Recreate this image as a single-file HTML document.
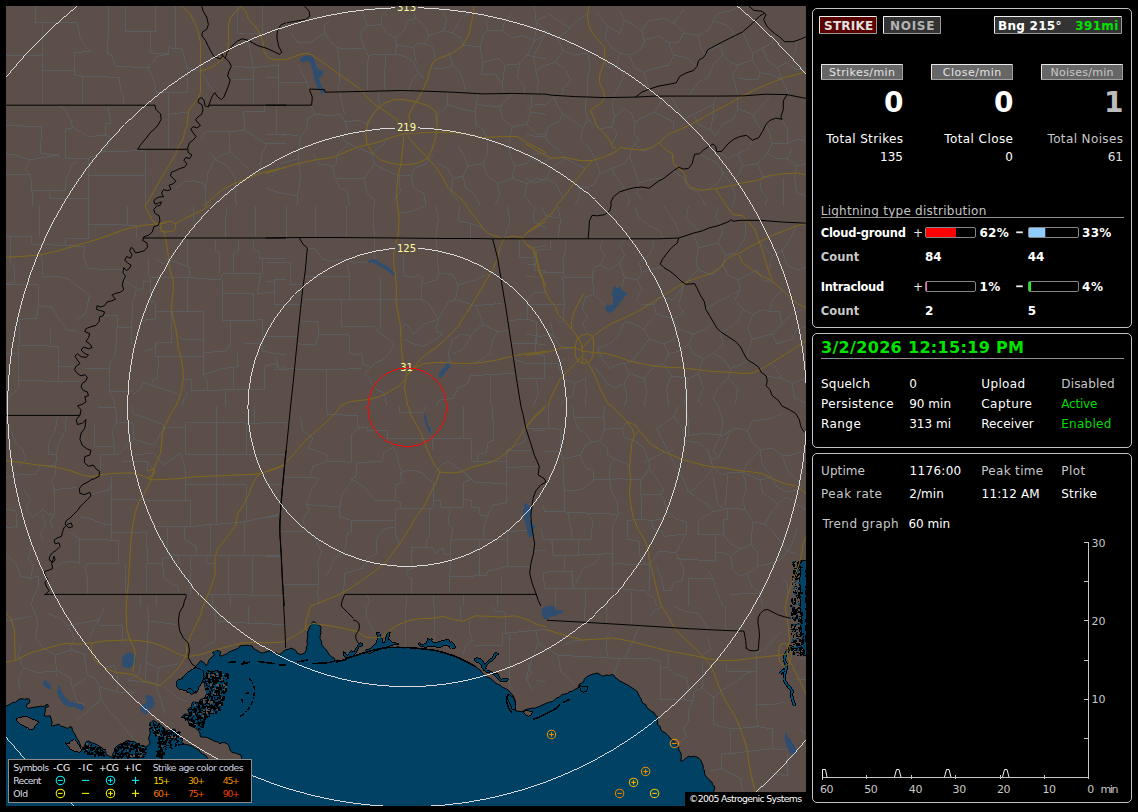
<!DOCTYPE html>
<html lang="en"><head><meta charset="utf-8"><title>Lightning Detector</title>
<style>
html,body{margin:0;padding:0;background:#000;overflow:hidden}
svg{display:block}
text{font-family:'DejaVu Sans','Liberation Sans',sans-serif;white-space:pre}
</style></head>
<body>
<svg width="1138" height="812" viewBox="0 0 1138 812" shape-rendering="auto">
<rect x="0" y="0" width="1138" height="812" fill="#000"/>
<svg x="6" y="6" width="800" height="800" viewBox="6 6 800 800" overflow="hidden" shape-rendering="crispEdges">
<rect x="6" y="6" width="800" height="800" fill="#5c4f49"/>
<path d="M35.5,6.0 35.5,22.7 77.4,22.7 79.9,35.5 84.8,45.4 91.0,51.6 74.9,52.3 74.9,74.9 82.3,76.2 119.3,77.4 120.5,89.7 123.0,94.6 123.0,105.2 M42.9,22.7 42.9,105.2 M6.0,55.2 42.9,55.2 M42.9,70.0 74.9,70.0 M108.2,6.0 108.2,35.5 107.0,52.8 111.9,55.2 115.6,66.3 147.6,67.6 153.7,79.9 156.2,92.2 168.5,92.7 187.0,92.7 M125.4,6.0 125.4,31.9 155.0,31.9 155.0,6.0 M150.1,31.9 150.1,52.8 168.5,54.0 168.5,47.9 182.1,49.1 187.0,67.6 187.0,92.7 M175.9,6.0 175.9,47.9 M147.6,67.6 156.2,56.5 168.5,54.0 M82.3,76.2 82.3,105.2 M58.9,105.7 65.1,109.4 71.3,121.7 72.5,127.9 65.1,129.1 65.1,158.2 M6.0,125.4 41.7,126.7 40.5,153.7 58.9,155.0 58.9,158.2 M108.2,105.7 109.4,114.3 110.7,123.0 105.7,124.2 105.7,135.3 87.3,136.5 72.5,127.9 M105.7,135.3 111.9,139.0 104.5,151.3 87.3,158.7 65.1,158.2 M104.5,151.3 145.1,150.8 145.1,206.0 M88.5,158.7 88.5,206.0 M88.5,175.9 145.1,175.9 M6.0,153.7 15.8,155.0 29.4,159.9 58.9,155.0 M29.4,159.9 25.7,168.5 30.6,174.7 31.9,190.7 33.1,206.0 M6.0,174.7 30.6,174.7 M31.9,190.7 65.1,190.7 66.3,178.4 72.5,163.6 77.4,159.9 M49.1,191.2 50.3,198.1 88.5,198.1 M168.5,92.7 168.5,114.3 187.0,111.9 M168.5,114.3 168.5,148.8 M207.9,151.3 215.3,158.7 207.9,173.4 205.5,188.2 205.0,206.0 M175.9,188.2 183.3,182.1 193.1,180.8 203.0,183.3 205.5,188.2 M215.3,158.7 230.1,151.3 242.4,163.6 248.6,168.5 M230.1,151.3 228.9,131.6 244.9,130.4 243.6,111.9 264.6,111.9 264.6,105.2 M228.9,131.6 205.5,131.6 200.5,139.0 M244.9,130.4 262.1,141.4 267.0,143.9 262.1,153.7 259.6,173.4 M276.9,105.2 276.9,134.0 286.0,135.3 M267.0,143.9 286.0,143.9 M214.1,158.7 227.6,166.1 235.0,178.4 236.2,206.0 M237.5,6.0 237.5,33.1 262.1,33.1 262.1,6.0 M248.6,40.5 253.5,67.6 253.5,104.5 M231.3,66.3 253.5,67.6 278.1,65.1 278.1,104.5 M232.5,79.9 253.5,79.9 M203.0,74.9 210.4,87.3 215.3,92.2 M187.0,67.6 200.5,71.3 M325.1,33.1 331.3,42.9 337.4,47.9 338.6,55.2 339.9,74.9 338.6,89.7 M309.1,42.9 325.1,33.1 323.9,25.7 330.0,20.8 M337.4,47.9 349.7,49.1 364.5,47.9 368.2,55.2 367.0,89.7 M364.5,47.9 360.8,38.0 362.0,30.6 367.0,25.7 364.5,15.8 362.0,10.9 M367.0,25.7 381.7,24.5 381.7,15.8 386.7,10.9 M381.7,24.5 386.7,33.1 395.3,38.0 396.5,45.4 395.3,54.0 385.4,54.0 384.2,89.7 M368.2,55.2 385.4,54.0 M395.3,38.0 403.9,30.6 407.6,20.8 416.2,18.3 413.7,10.9 M416.2,18.3 426.1,28.2 428.5,35.5 423.6,44.2 417.4,42.9 M396.5,45.4 413.7,47.9 417.4,42.9 M395.3,54.0 408.8,57.7 413.7,62.6 418.7,73.7 423.6,77.4 M413.7,47.9 416.2,62.6 M407.6,91.0 413.7,77.4 418.7,73.7 M423.6,44.2 433.4,46.6 434.7,58.9 M428.5,35.5 443.3,30.6 453.1,33.1 460.5,38.0 463.0,45.4 M443.3,30.6 447.0,20.8 443.3,10.9 M453.1,33.1 458.1,23.2 463.0,15.8 470.4,13.4 M448.2,51.6 453.1,65.1 458.1,70.0 463.0,79.9 465.5,91.0 M463.0,45.4 480.2,46.6 482.7,62.6 481.5,74.9 495.0,73.7 502.4,84.8 502.4,92.2 M480.2,46.6 482.7,35.5 487.6,30.6 486.4,20.8 490.1,15.8 M487.6,30.6 502.4,30.6 512.2,38.0 522.1,35.5 534.4,40.5 M502.4,30.6 504.9,20.8 512.2,13.4 M482.7,62.6 497.5,58.9 504.9,65.1 519.6,63.9 527.0,55.2 534.4,40.5 546.0,35.5 M504.9,65.1 502.4,84.8 M519.6,63.9 517.2,77.4 524.6,87.3 524.6,93.4 M534.4,40.5 536.9,20.8 546.0,15.8 M527.0,55.2 546.0,58.9 M433.4,68.8 448.2,67.6 453.1,65.1 M278.3,62.6 278.3,82.3 309.1,82.3 M298.0,65.1 305.4,79.9 309.1,88.5 M266.0,77.4 278.3,77.4 M290.6,33.1 298.0,42.9 309.1,42.9 M310.3,105.2 315.2,114.3 307.9,118.0 306.6,129.1 300.5,136.5 298.0,153.7 299.2,163.6 M315.2,114.3 330.0,115.6 339.9,114.3 344.8,121.7 347.3,129.1 342.3,136.5 348.5,143.9 M339.9,92.2 342.3,104.5 344.8,114.3 M378.0,92.2 379.3,104.5 371.9,114.3 368.2,124.2 M344.8,121.7 359.6,120.5 368.2,124.2 M447.0,92.2 447.0,104.5 438.4,114.3 437.1,124.2 M447.0,104.5 463.0,109.4 475.3,111.9 477.8,93.4 M475.3,111.9 475.3,124.2 482.7,129.1 487.6,139.0 M477.8,104.5 499.9,107.0 506.1,99.6 512.2,93.4 M499.9,107.0 502.4,119.3 512.2,126.7 527.0,124.2 530.7,111.9 531.9,94.6 M512.2,126.7 509.8,139.0 M530.7,111.9 546.0,114.3 M527.0,124.2 536.9,134.0 546.0,134.0 M266.0,134.0 298.0,135.3 M299.2,163.6 300.5,178.4 298.0,193.1 296.8,206.0 M312.8,153.7 318.9,163.6 332.5,166.1 336.2,163.6 337.4,153.7 348.5,143.9 M332.5,166.1 334.9,178.4 339.9,188.2 347.3,190.7 349.7,206.0 M348.5,143.9 364.5,151.3 371.9,153.7 374.3,163.6 381.7,168.5 M371.9,153.7 384.2,143.9 386.7,136.5 M336.2,178.4 364.5,178.4 374.3,163.6 M364.5,178.4 367.0,193.1 374.3,200.5 374.3,206.0 M381.7,168.5 399.0,175.9 411.3,175.9 413.7,168.5 M411.3,175.9 413.7,188.2 423.6,193.1 426.1,206.0 M399.0,175.9 400.2,190.7 394.0,200.5 M413.7,168.5 426.1,163.6 433.4,153.7 M438.4,163.6 448.2,168.5 453.1,178.4 450.7,193.1 458.1,200.5 M453.1,178.4 463.0,175.9 467.9,166.1 463.0,153.7 458.1,146.4 M467.9,166.1 482.7,163.6 487.6,153.7 487.6,139.0 M482.7,163.6 487.6,175.9 497.5,183.3 512.2,178.4 514.7,166.1 509.8,153.7 509.8,139.0 M463.0,175.9 465.5,188.2 475.3,195.6 480.2,206.0 M497.5,183.3 499.9,195.6 495.0,206.0 M512.2,178.4 527.0,183.3 536.9,178.4 546.0,180.8 M514.7,166.1 527.0,163.6 534.4,153.7 546.0,153.7 M527.0,183.3 524.6,195.6 531.9,206.0 M266.0,188.2 280.8,193.1 296.8,195.6 M270.9,178.4 280.8,163.6 298.0,158.7 M534.6,6.0 535.8,20.8 545.7,30.6 540.8,42.9 533.4,55.2 535.8,70.0 538.3,79.9 537.1,93.4 M548.2,13.4 558.0,20.8 570.3,28.2 577.7,20.8 587.6,13.4 M545.7,30.6 558.0,38.0 570.3,28.2 M558.0,38.0 562.9,50.3 555.5,62.6 545.7,65.1 535.8,70.0 M562.9,50.3 575.2,55.2 587.6,52.8 590.0,65.1 587.6,79.9 587.6,95.9 M555.5,62.6 565.4,70.0 570.3,79.9 562.9,89.7 562.9,94.6 M597.4,13.4 607.3,25.7 619.6,33.1 624.5,20.8 619.6,10.9 M607.3,25.7 604.8,38.0 612.2,47.9 619.6,52.8 629.4,55.2 639.3,50.3 644.2,40.5 641.7,30.6 634.3,25.7 624.5,20.8 M619.6,52.8 617.1,65.1 607.3,67.6 604.8,60.2 M617.1,65.1 624.5,74.9 619.6,84.8 614.6,94.6 M629.4,55.2 634.3,67.6 644.2,72.5 649.1,87.3 M644.2,40.5 659.0,35.5 668.8,42.9 673.7,55.2 668.8,65.1 659.0,67.6 649.1,70.0 644.2,72.5 M641.7,30.6 649.1,20.8 663.9,18.3 673.7,23.2 678.7,15.8 683.6,8.5 M673.7,23.2 683.6,33.1 678.7,42.9 668.8,42.9 M683.6,33.1 698.4,35.5 708.2,30.6 713.1,20.8 718.1,13.4 M698.4,35.5 700.8,47.9 705.8,55.2 M673.7,55.2 686.1,57.7 695.9,65.1 M713.1,20.8 727.9,25.7 735.3,35.5 M718.1,13.4 730.4,10.9 740.2,6.0 M708.2,50.3 720.5,45.4 723.0,55.2 730.4,62.6 737.8,65.1 732.8,74.9 735.3,84.8 737.8,95.9 M723.0,55.2 713.1,65.1 708.2,77.4 698.4,82.3 688.5,95.9 M742.7,31.9 747.6,42.9 752.5,52.8 762.4,47.9 772.2,42.9 774.7,33.6 M737.8,65.1 752.5,60.2 752.5,52.8 M762.4,47.9 767.3,60.2 777.2,67.6 787.0,62.6 794.4,55.2 796.9,40.5 M752.5,60.2 759.9,72.5 757.5,79.9 747.6,79.9 737.8,77.4 M777.2,67.6 782.1,79.9 787.0,89.7 788.3,94.6 M759.9,72.5 772.2,74.9 782.1,79.9 M787.0,62.6 796.9,70.0 806.0,67.6 M554.3,97.1 558.0,107.0 562.9,114.3 558.0,121.7 548.2,126.7 545.7,136.5 550.6,143.9 558.0,148.8 M526.0,109.4 535.8,104.5 545.7,104.5 554.3,97.1 M526.0,134.0 535.8,136.5 545.7,136.5 M562.9,114.3 575.2,121.7 582.6,129.1 580.2,139.0 587.6,146.4 592.5,153.7 M586.3,97.1 585.1,109.4 587.6,119.3 582.6,129.1 M587.6,119.3 599.9,129.1 612.2,126.7 614.6,116.8 612.2,104.5 614.6,97.6 M614.6,116.8 624.5,109.4 631.9,114.3 634.3,121.7 644.2,116.8 654.0,111.9 659.0,104.5 663.9,97.6 M634.3,121.7 634.3,134.0 639.3,140.2 634.3,143.9 M654.0,111.9 663.9,116.8 673.7,121.7 673.7,129.1 M612.2,126.7 617.1,134.0 612.2,143.9 M634.3,143.9 644.2,151.3 654.0,146.4 M671.3,97.6 678.7,109.4 683.6,119.3 693.4,114.3 703.3,109.4 713.1,104.5 715.6,97.6 M713.1,104.5 713.1,116.8 710.7,129.1 715.6,136.5 M693.4,114.3 698.4,124.2 708.2,129.1 710.7,129.1 M737.8,97.1 737.8,109.4 732.8,119.3 723.0,124.2 715.6,136.5 M737.8,109.4 752.5,114.3 762.4,104.5 769.8,97.1 M752.5,114.3 757.5,124.2 762.4,131.6 M526.0,156.2 540.8,163.6 550.6,158.2 M558.0,148.8 565.4,158.7 575.2,163.6 585.1,168.5 M592.5,153.7 597.4,163.6 599.9,173.4 594.9,183.3 587.6,188.2 577.7,185.8 M599.9,173.4 612.2,168.5 624.5,163.6 629.4,156.2 634.3,143.9 M629.4,156.2 634.3,168.5 639.3,183.3 636.8,193.1 641.7,200.5 M612.2,168.5 617.1,178.4 624.5,188.2 629.4,200.5 627.0,206.0 M639.3,183.3 654.0,178.4 663.9,178.4 M526.0,178.4 535.8,183.3 545.7,178.4 555.5,183.3 562.9,198.1 M545.7,178.4 550.6,168.5 565.4,158.7 M577.7,185.8 580.2,195.6 575.2,206.0 M673.7,170.5 683.6,178.4 688.5,188.2 698.4,193.1 703.3,200.5 705.8,206.0 M698.4,153.7 708.2,158.7 718.1,163.6 723.0,173.4 718.1,183.3 708.2,188.2 M718.1,151.8 727.9,158.7 737.8,153.7 747.6,148.8 752.5,140.2 M737.8,153.7 742.7,166.1 737.8,175.9 730.4,183.3 723.0,173.4 M742.7,166.1 757.5,163.6 767.3,153.7 772.2,143.9 769.8,134.0 766.1,124.2 M757.5,163.6 762.4,175.9 772.2,178.4 M772.2,143.9 787.0,143.9 796.9,139.0 806.0,141.4 M782.1,119.3 787.0,129.1 787.0,143.9 M787.0,158.7 796.9,166.1 806.0,163.6 M767.3,153.7 777.2,158.7 787.0,158.7 791.9,148.8 M730.4,183.3 735.3,193.1 732.8,206.0 M762.4,175.9 759.9,188.2 767.3,198.1 764.9,206.0 M783.3,178.4 783.3,206.0 M796.9,166.1 794.4,178.4 796.9,193.1 806.0,195.6 M88.5,206.0 88.5,224.5 136.5,225.2 136.5,238.0 M127.9,206.0 127.9,225.2 M88.5,224.5 88.5,238.0 65.1,238.0 65.1,245.4 84.8,246.6 83.6,255.2 87.3,268.8 124.2,269.5 M6.0,236.8 31.9,236.8 31.9,244.2 65.1,245.4 M10.9,236.8 10.9,262.6 14.6,267.6 14.6,282.3 6.0,283.6 M39.2,206.0 39.2,236.8 M41.7,255.2 42.9,277.4 47.9,276.2 63.9,277.4 70.0,279.9 89.7,295.9 87.3,304.5 84.8,314.3 77.4,319.3 M38.0,284.8 38.0,305.7 51.6,307.0 58.9,319.3 66.3,329.1 77.4,331.6 M6.0,284.8 38.0,284.8 M19.5,319.3 36.8,318.0 38.0,305.7 M19.5,319.3 19.5,345.1 58.9,346.4 58.9,366.1 73.7,366.1 M50.3,329.1 50.3,345.1 M18.3,345.1 18.3,380.8 79.9,381.3 M6.0,353.7 18.3,353.7 M58.9,366.1 58.9,380.8 M6.0,400.5 18.3,388.2 18.3,380.8 M103.3,315.6 116.8,315.6 118.0,327.9 131.6,327.9 132.8,302.0 136.5,289.7 143.9,288.5 143.9,281.1 150.1,281.1 M124.2,269.5 123.7,279.9 136.5,288.5 M116.8,327.9 115.6,353.7 109.4,363.6 109.4,391.9 114.3,400.5 114.3,406.0 M131.6,327.9 131.6,343.9 136.5,343.9 M109.4,391.9 131.6,391.9 132.8,388.2 M84.8,368.5 109.4,368.5 M150.1,277.4 150.1,300.8 155.0,302.0 155.0,319.3 140.2,320.5 M150.1,277.4 187.0,277.4 220.2,279.9 222.7,273.7 260.9,273.0 259.6,279.9 257.2,293.4 M187.0,239.2 187.0,266.3 189.5,267.6 189.5,277.4 M155.0,258.9 163.6,263.9 167.3,258.9 187.0,266.3 M148.8,257.7 148.8,277.4 M187.0,277.4 187.0,311.9 203.0,311.9 203.0,339.0 183.3,339.0 178.4,336.5 M155.0,311.9 187.0,311.9 M171.0,311.9 171.0,342.7 156.2,342.7 155.0,356.2 158.7,356.7 157.4,378.4 152.5,379.6 153.7,385.8 142.7,382.1 141.4,388.2 132.8,394.4 M142.7,353.7 146.4,350.1 153.7,348.8 156.2,342.7 M158.7,356.7 203.0,356.2 M203.0,339.0 203.0,374.7 222.7,368.5 233.8,367.3 M215.3,239.2 215.3,250.3 219.0,251.6 219.0,273.0 M238.7,239.2 238.7,250.3 233.8,254.0 233.8,273.0 M253.5,239.2 253.5,250.3 259.6,251.6 259.6,258.9 286.0,258.9 M262.1,258.9 262.1,273.0 M222.7,279.9 222.7,320.5 253.5,320.5 253.5,293.4 222.7,293.4 M257.2,293.4 274.4,292.2 274.4,279.9 286.0,279.9 M253.5,320.5 262.1,319.3 262.1,351.3 286.0,355.0 M230.1,320.5 230.1,343.9 226.4,351.3 203.0,352.5 M237.5,351.3 237.5,366.1 233.8,367.3 233.8,389.5 216.5,390.2 207.9,390.7 206.7,378.4 203.0,374.7 M244.9,343.9 262.1,343.9 M264.6,366.1 264.6,389.5 233.8,389.5 M286.0,366.1 279.3,368.5 276.9,363.6 264.6,366.1 M183.3,379.6 191.9,379.6 191.9,390.7 207.9,390.7 M153.7,385.8 178.4,394.4 M188.2,391.9 183.3,400.5 182.1,406.0 M225.2,390.7 225.2,406.0 M248.6,389.5 248.6,406.0 M226.4,206.0 225.2,238.0 M255.9,206.0 255.9,238.0 M193.1,206.0 193.1,220.8 M286.9,206.0 286.9,237.5 M315.2,206.0 315.2,237.5 M346.0,206.0 346.0,237.5 M373.1,206.0 374.3,237.5 M399.0,213.4 413.7,210.9 423.6,206.0 M435.9,206.0 438.4,220.8 435.9,237.5 M459.3,206.0 458.1,220.8 470.4,223.2 470.4,237.5 M470.4,223.2 482.7,228.2 M507.3,206.0 509.8,220.8 504.9,237.5 M534.4,206.0 533.2,220.8 546.0,228.2 M306.6,247.9 315.2,249.1 322.6,258.9 332.5,261.4 342.3,258.9 354.6,262.6 364.5,262.6 368.2,261.4 M347.3,265.1 349.7,276.2 349.7,299.1 M302.9,276.2 349.7,276.2 M302.9,299.1 341.1,299.1 380.5,299.6 421.1,299.6 M380.5,277.4 380.5,299.6 M374.3,239.2 374.3,258.9 M402.7,239.2 403.9,276.2 413.7,277.4 418.7,274.9 422.4,277.4 421.1,299.6 M435.9,239.2 437.1,250.3 438.4,272.5 435.9,279.9 423.6,283.6 421.1,279.9 M438.4,272.5 453.1,274.9 458.1,284.8 455.6,299.6 448.2,302.0 438.4,319.3 M458.1,284.8 475.3,279.9 487.6,274.9 495.0,272.5 M421.1,299.6 428.5,303.3 438.4,319.3 423.6,324.2 413.7,334.0 406.4,324.2 400.2,329.1 M341.1,299.1 341.1,326.7 374.3,326.7 380.5,334.0 389.1,340.2 M380.5,299.6 380.5,329.1 M300.5,321.7 317.7,321.7 318.9,334.0 341.1,334.0 M341.1,334.0 349.7,335.3 349.7,353.7 362.0,355.0 362.0,363.6 369.4,366.1 M298.0,343.9 315.2,345.1 318.9,334.0 M266.0,281.1 274.6,281.1 274.6,304.5 302.9,304.5 M266.0,262.6 290.6,262.6 290.6,284.8 302.9,284.8 M266.0,336.5 298.0,336.5 M275.8,356.2 278.3,366.1 274.6,369.8 295.5,368.5 M326.3,369.8 326.3,406.0 M295.5,369.8 326.3,369.8 362.0,368.5 M389.1,340.2 394.0,343.9 389.1,353.7 384.2,358.7 374.3,363.6 364.5,373.4 369.4,378.4 374.3,388.2 384.2,393.1 386.7,406.0 M438.4,319.3 435.9,331.6 443.3,334.0 435.9,339.0 423.6,346.4 413.7,343.9 403.9,339.0 M475.3,305.7 480.2,315.6 482.7,324.2 475.3,330.4 470.4,336.5 460.5,334.0 453.1,339.0 448.2,353.7 450.7,363.6 M475.3,305.7 487.6,304.5 502.4,303.3 M455.6,299.6 475.3,305.7 M482.7,324.2 497.5,331.6 508.6,330.4 M497.5,331.6 492.5,340.2 490.1,353.7 482.7,358.7 475.3,363.6 M470.4,336.5 463.0,348.8 453.1,353.7 M546.0,292.2 534.4,292.2 527.0,299.6 527.0,319.3 507.3,320.5 M527.0,319.3 536.9,321.7 536.9,343.9 546.0,345.1 M512.2,343.9 536.9,343.9 M534.4,257.7 534.4,270.0 546.0,271.3 M519.6,239.2 519.6,257.7 534.4,257.7 533.2,247.9 546.0,245.4 M514.7,373.4 487.6,374.7 470.4,375.9 467.9,383.3 458.1,388.2 453.1,398.1 438.4,400.5 435.9,406.0 M490.1,375.9 490.1,406.0 M515.9,378.4 546.0,378.4 M512.2,358.7 527.0,363.6 546.0,363.6 M558.0,206.0 560.5,220.8 558.0,238.0 M540.8,206.0 545.7,215.8 558.0,218.3 M634.3,206.0 639.3,218.3 649.1,225.7 659.0,230.6 663.9,238.8 M663.9,206.0 673.7,220.8 678.7,230.6 M688.5,206.0 686.1,218.3 698.4,230.6 M718.1,206.0 715.6,218.3 720.5,224.5 M526.0,263.9 535.8,265.1 537.1,250.3 550.6,249.1 550.6,240.5 M565.4,240.5 565.4,250.3 562.9,260.2 564.2,277.4 592.5,277.4 593.7,267.6 599.9,265.1 604.8,255.2 599.9,247.9 602.3,240.5 M562.9,277.4 564.2,304.5 562.9,321.7 558.0,321.7 M526.0,276.2 538.3,277.4 543.2,272.5 562.9,272.5 M526.0,304.5 564.2,304.5 M592.5,277.4 593.7,294.6 585.1,297.1 582.6,309.4 587.6,316.8 582.6,324.2 587.6,334.0 M593.7,294.6 604.8,304.5 M599.9,265.1 609.7,270.0 619.6,262.6 624.5,255.2 619.6,245.4 624.5,240.5 M619.6,262.6 624.5,277.4 636.8,279.9 641.7,272.5 639.3,262.6 649.1,255.2 654.0,245.4 651.6,239.2 M624.5,277.4 622.0,287.3 M636.8,279.9 641.7,289.7 636.8,299.6 641.7,304.5 654.0,304.5 659.0,297.1 M641.7,272.5 659.0,267.6 663.9,267.6 M659.0,297.1 673.7,299.6 683.6,284.8 M654.0,304.5 656.5,314.3 649.1,321.7 644.2,329.1 634.3,324.2 624.5,321.7 M624.5,321.7 619.6,334.0 609.7,343.9 597.4,348.8 M644.2,329.1 649.1,339.0 641.7,348.8 634.3,358.7 624.5,363.6 M656.5,314.3 673.7,319.3 683.6,311.9 678.7,304.5 683.6,284.8 M673.7,319.3 678.7,329.1 673.7,339.0 663.9,343.9 649.1,339.0 M678.7,329.1 693.4,334.0 705.8,329.1 713.1,321.7 M693.4,334.0 688.5,343.9 693.4,353.7 703.3,358.7 713.1,353.7 723.0,343.9 720.5,331.6 M663.9,343.9 668.8,353.7 663.9,363.6 654.0,366.1 M688.5,343.9 678.7,351.3 668.8,353.7 M550.6,321.7 553.1,334.0 558.0,343.9 565.4,348.8 575.2,347.6 M526.0,334.0 540.8,336.5 553.1,334.0 M535.8,336.5 535.8,353.7 544.5,356.2 544.5,378.4 535.8,378.4 M544.5,363.6 558.0,363.6 565.4,358.7 M558.0,363.6 562.9,378.4 575.2,383.3 585.1,378.4 586.3,393.1 585.1,406.0 M575.2,383.3 572.8,395.6 562.9,400.5 560.5,406.0 M526.0,378.4 535.8,378.4 538.3,393.1 533.4,406.0 M597.4,348.8 602.3,358.7 609.7,368.5 619.6,363.6 624.5,363.6 629.4,373.4 624.5,383.3 614.6,388.2 607.3,383.3 599.9,373.4 592.5,366.1 M629.4,373.4 644.2,378.4 654.0,366.1 M644.2,378.4 646.7,393.1 644.2,406.0 M624.5,383.3 627.0,398.1 624.5,406.0 M663.9,363.6 671.3,375.9 666.4,388.2 668.8,406.0 M671.3,375.9 688.5,378.4 698.4,373.4 703.3,358.7 M698.4,373.4 703.3,388.2 698.4,400.5 703.3,406.0 M688.5,378.4 686.1,393.1 683.6,406.0 M713.1,353.7 723.0,358.7 730.4,368.5 727.9,378.4 737.8,388.2 735.3,403.0 M730.4,368.5 742.7,363.6 747.6,359.9 M727.9,378.4 718.1,388.2 713.1,398.1 718.1,406.0 M693.4,233.1 698.4,247.9 695.9,262.6 698.4,270.0 688.5,279.9 686.1,284.3 M698.4,247.9 718.1,242.9 725.5,255.2 723.0,265.1 727.9,274.9 737.8,279.9 747.6,274.9 757.5,270.0 M718.1,242.9 723.0,230.6 720.5,224.5 M725.5,255.2 735.3,252.8 745.2,238.0 745.2,220.8 M698.4,270.0 713.1,274.9 723.0,265.1 M737.8,279.9 740.2,289.7 735.3,299.6 742.7,309.4 752.5,314.3 762.4,309.4 769.8,311.9 M740.2,289.7 713.1,304.5 705.8,309.4 M742.7,309.4 737.8,321.7 727.9,329.1 720.5,331.6 M752.5,314.3 747.6,329.1 752.5,339.0 772.2,334.0 782.1,324.2 779.6,311.9 769.8,311.9 M752.5,339.0 747.6,353.7 747.6,359.9 M772.2,334.0 777.2,343.9 791.9,339.0 796.9,329.1 806.0,326.7 M782.1,324.2 791.9,314.3 801.8,309.4 M757.5,270.0 762.4,279.9 772.2,282.3 M769.8,311.9 772.2,299.6 782.1,289.7 M772.2,363.6 782.1,378.4 791.9,383.3 806.0,378.4 M766.1,375.9 782.1,378.4 M791.9,383.3 794.4,398.1 806.0,403.0 M759.9,241.7 772.2,255.2 782.1,250.3 791.9,235.5 796.9,225.7 M782.1,250.3 787.0,265.1 796.9,270.0 806.0,267.6 M772.2,255.2 769.8,267.6 M57.7,416.3 55.2,430.6 49.1,440.5 47.9,454.0 56.5,454.0 55.2,474.9 51.6,479.9 54.0,489.7 54.0,514.3 50.3,521.7 52.8,529.1 M66.3,416.3 65.1,430.6 57.7,445.4 56.5,454.0 M6.0,477.4 18.3,474.9 35.5,474.9 40.5,465.1 55.2,465.1 M10.9,430.6 15.8,442.9 23.2,450.3 25.7,460.2 18.3,465.1 M6.0,509.4 15.8,510.7 17.1,526.7 6.0,527.9 M23.2,489.7 30.6,499.6 25.7,509.4 33.1,516.8 42.9,509.4 47.9,514.3 54.0,514.3 M54.0,489.7 77.4,487.3 M6.0,553.7 15.8,563.6 20.8,575.9 30.6,578.4 38.0,575.9 M30.6,548.8 28.2,558.7 33.1,566.1 30.6,578.4 M38.0,575.9 38.0,588.2 33.1,598.1 30.6,606.0 M42.9,514.3 45.4,524.2 40.5,534.0 42.9,539.0 M98.3,406.0 98.3,407.2 115.6,407.2 116.8,422.7 132.8,422.7 M94.6,423.2 94.6,446.6 114.3,446.6 114.3,454.0 100.8,454.0 100.8,470.0 M116.8,422.7 111.9,430.6 114.3,446.6 M132.8,406.0 132.8,413.4 163.6,424.5 163.6,428.2 185.8,426.9 M132.8,422.7 134.0,439.2 119.3,454.0 114.3,454.0 M134.0,439.2 153.7,445.4 163.6,428.2 M185.8,422.7 185.8,454.0 216.5,454.0 216.5,422.7 185.8,422.7 M216.5,422.7 239.9,422.7 247.3,423.2 286.0,422.7 M216.5,454.0 246.1,454.0 246.1,423.2 M246.1,454.0 286.0,454.0 M254.7,406.0 254.7,422.7 M216.5,406.0 216.5,422.7 M147.6,461.4 147.6,471.3 M121.7,461.4 147.6,461.4 153.7,470.0 M180.8,452.8 185.8,472.5 185.8,500.8 190.7,500.8 190.7,526.7 M134.0,455.2 153.7,452.8 163.6,465.1 180.8,452.8 M216.5,454.0 216.5,524.2 244.9,521.7 279.3,514.3 M185.8,484.8 216.5,484.8 246.1,484.8 246.1,521.7 M111.9,476.2 111.9,499.6 153.7,500.1 185.8,500.8 M79.9,516.8 92.2,519.3 104.5,524.2 111.9,524.2 111.9,499.6 M92.2,494.6 99.6,492.2 109.4,489.7 111.9,482.3 M111.9,524.2 111.9,540.2 118.0,540.2 118.0,563.6 87.3,563.6 84.8,567.3 87.3,578.4 87.3,594.4 M68.8,531.6 79.9,539.0 111.9,540.2 M79.9,539.0 79.9,563.6 70.0,561.1 60.2,563.6 52.8,568.5 M111.9,532.8 134.0,532.8 146.4,531.6 147.6,563.6 162.4,563.6 M156.2,526.7 190.7,526.7 210.4,524.2 216.5,524.2 M167.3,526.7 167.3,553.7 178.4,555.0 178.4,563.6 M184.5,526.7 184.5,540.2 195.6,546.4 196.8,555.0 178.4,555.0 M210.4,524.2 210.4,555.0 196.8,555.0 M244.9,521.7 244.9,555.0 210.4,555.0 M125.4,563.6 125.4,594.4 M146.4,563.6 146.4,594.4 M162.4,558.7 163.6,578.4 171.0,583.3 178.4,587.0 178.4,594.4 M162.4,558.7 178.4,555.0 M190.7,555.0 190.7,594.4 M206.7,555.0 206.7,563.6 215.3,563.6 M228.9,555.0 228.9,594.4 M252.2,555.0 252.2,594.4 M244.9,555.0 280.6,555.0 M230.1,594.4 230.1,606.0 M207.9,594.4 286.0,595.6 M212.8,594.4 212.8,606.0 M140.2,594.4 140.2,606.0 M156.2,594.4 156.2,606.0 M326.3,406.0 327.6,414.6 357.1,415.4 358.3,428.2 367.0,426.9 367.0,430.6 387.9,430.6 387.9,440.5 394.0,446.6 384.2,452.8 381.7,461.4 357.1,462.6 355.9,477.4 351.0,478.6 M399.0,406.0 399.0,412.2 423.6,412.2 426.1,406.0 M463.0,406.0 463.0,438.0 432.2,438.0 432.2,450.3 M387.9,430.6 387.9,438.0 432.2,438.0 M492.5,406.0 493.8,440.5 487.6,442.9 486.4,452.8 477.8,454.0 477.8,461.4 506.1,461.4 506.1,450.3 M463.0,438.0 471.6,438.0 471.6,461.4 477.8,461.4 M522.1,430.6 525.8,440.5 506.1,450.3 M266.0,422.0 288.2,422.0 M300.5,417.1 302.9,430.6 312.8,438.0 307.9,447.9 318.9,451.6 327.6,455.2 326.3,461.4 351.0,462.1 351.0,435.5 358.3,428.2 M326.3,461.4 312.8,466.3 310.3,477.4 318.9,478.6 311.6,489.7 306.6,504.5 309.1,509.4 302.9,519.3 305.4,529.1 315.2,539.0 321.4,551.3 317.7,563.6 318.9,578.4 317.7,593.1 318.9,606.0 M284.5,477.4 310.3,477.4 M266.0,484.8 280.8,484.8 M266.0,518.0 278.3,515.6 M280.8,531.6 305.4,531.6 M266.0,556.2 280.8,556.2 M283.2,584.5 318.9,584.5 M351.0,478.6 364.5,487.3 375.6,500.8 395.3,500.8 395.3,484.8 402.7,482.3 400.2,472.5 403.9,471.3 413.7,470.0 423.6,473.7 428.5,479.9 433.4,482.3 M394.0,446.6 400.2,467.6 402.7,472.5 M351.0,478.6 351.0,482.3 342.3,493.4 339.9,507.0 339.9,516.8 351.0,520.5 395.3,520.5 M306.6,504.5 339.9,507.0 M395.3,500.8 400.2,502.0 400.2,508.2 395.3,509.4 395.3,520.5 395.3,534.0 399.0,543.9 M351.0,520.5 351.0,531.6 347.3,534.0 344.8,551.3 333.7,558.7 330.0,568.5 325.1,575.9 M395.3,526.7 384.2,529.1 376.8,539.0 376.8,553.7 367.0,558.7 362.0,568.5 344.8,573.4 343.6,593.1 M400.2,508.2 429.8,508.2 433.4,508.2 433.4,482.3 M433.4,500.8 440.8,500.8 440.8,507.0 463.0,507.0 463.0,482.3 470.4,479.9 465.5,473.7 448.2,461.4 440.8,465.1 435.9,472.5 M465.5,473.7 474.1,482.3 506.1,483.6 506.1,461.4 M464.2,499.6 471.6,500.8 471.6,507.0 479.0,508.2 480.2,515.6 487.6,515.6 492.5,504.5 506.1,503.3 506.1,483.6 M429.8,508.2 429.8,536.5 426.1,540.2 426.1,547.6 411.3,547.6 411.3,563.6 413.7,568.5 406.4,569.8 407.6,577.1 411.3,578.4 411.3,594.4 M449.5,509.4 448.2,524.2 453.1,529.1 450.7,540.2 449.5,593.1 M426.1,547.6 433.4,547.6 434.7,553.7 443.3,547.6 443.3,553.7 449.5,555.0 M450.7,540.2 479.0,539.0 507.3,539.0 507.3,531.6 527.0,530.4 M487.6,515.6 483.9,529.1 483.9,539.0 M479.0,539.0 479.0,575.9 449.5,576.4 M507.3,539.0 507.3,566.1 499.9,568.5 487.6,571.0 486.4,575.9 479.0,575.9 M507.3,566.1 530.7,566.1 M501.2,575.9 501.2,594.4 M506.1,450.3 530.7,450.3 M506.1,467.6 536.9,466.3 M533.2,430.6 546.0,430.6 M534.4,551.3 546.0,550.1 M367.0,594.4 369.4,600.5 367.0,606.0 M406.4,594.4 406.4,606.0 M433.4,594.4 433.4,606.0 M463.0,594.4 463.0,606.0 M497.5,594.4 497.5,606.0 M548.2,406.0 548.2,428.2 526.0,428.2 M548.2,428.2 560.5,429.4 560.5,451.6 544.5,451.6 M572.8,406.0 574.0,417.1 603.6,417.1 604.8,406.0 M574.0,417.1 577.7,428.2 587.6,435.5 592.5,441.7 585.1,445.4 580.2,455.2 562.9,458.9 560.5,451.6 M603.6,417.1 604.8,429.4 622.0,428.2 627.0,422.0 M604.8,429.4 599.9,440.5 592.5,441.7 M622.0,428.2 624.5,438.0 634.3,440.5 M599.9,440.5 607.3,447.9 607.3,454.0 614.6,458.9 627.0,463.9 629.4,467.6 M580.2,455.2 585.1,467.6 593.7,471.3 593.7,479.9 581.4,489.7 564.2,491.0 M562.9,458.9 564.2,491.0 564.2,511.9 544.5,511.9 543.2,504.5 M593.7,479.9 609.7,479.9 611.0,489.7 617.1,502.0 618.3,514.3 M609.7,479.9 617.1,478.6 640.5,479.9 M614.6,458.9 609.7,467.6 609.7,479.9 M564.2,511.9 587.6,513.1 592.5,521.7 591.3,539.0 551.9,539.0 550.6,543.9 M587.6,513.1 618.3,514.3 612.2,526.7 612.2,553.7 612.2,590.7 M567.9,511.9 572.8,539.0 M551.9,539.0 553.1,555.0 578.9,555.0 578.9,540.2 M540.8,529.1 543.2,539.0 551.9,539.0 M564.2,555.0 564.2,571.0 543.2,572.2 544.5,588.2 572.8,588.2 572.8,571.0 564.2,571.0 M578.9,555.0 612.2,553.7 M599.9,556.2 594.9,563.6 582.6,568.5 575.2,583.3 572.8,588.2 M572.8,588.2 612.2,588.2 644.2,590.7 M612.2,563.6 649.1,564.8 649.1,590.7 M627.0,520.5 627.0,539.0 639.3,541.4 639.3,553.7 644.2,563.6 M640.5,479.9 641.7,519.3 627.0,520.5 M641.7,494.6 660.2,494.6 663.9,499.6 666.4,511.9 662.7,519.3 651.6,520.5 M641.7,519.3 651.6,520.5 654.0,529.1 662.7,531.6 663.9,536.5 673.7,535.3 686.1,534.0 686.1,521.7 676.2,519.3 671.3,514.3 666.4,511.9 M649.1,468.8 659.0,482.3 663.9,489.7 660.2,494.6 M634.3,440.5 644.2,447.9 649.1,462.6 649.1,468.8 M644.2,462.6 663.9,452.8 673.7,450.3 M649.1,468.8 641.7,479.9 M656.5,428.2 673.7,415.8 678.7,406.0 M673.7,415.8 683.6,430.6 683.6,440.5 M656.5,428.2 663.9,442.9 673.7,462.6 683.6,479.9 688.5,492.2 695.9,487.3 708.2,474.9 713.1,467.6 M688.5,492.2 698.4,499.6 708.2,504.5 713.1,511.9 703.3,516.8 698.4,521.7 698.4,534.0 723.0,534.0 723.0,519.3 727.9,519.3 727.9,508.2 713.1,511.9 M683.6,440.5 698.4,442.9 708.2,450.3 710.7,460.2 713.1,467.6 M688.5,435.5 703.3,433.1 723.0,435.5 730.4,430.6 M686.1,406.0 688.5,420.8 688.5,435.5 M718.1,406.0 723.0,420.8 720.5,435.5 713.1,450.3 718.1,457.7 710.7,460.2 M730.4,430.6 737.8,428.2 747.6,430.6 752.5,420.8 772.2,418.3 782.1,413.4 M730.4,430.6 725.5,442.9 718.1,457.7 M747.6,430.6 752.5,442.9 759.9,450.3 747.6,462.6 742.7,472.5 M713.1,467.6 723.0,474.9 730.4,472.5 742.7,472.5 745.2,479.9 746.4,489.7 742.7,499.6 745.2,509.4 727.9,508.2 M727.9,474.9 725.5,504.5 M713.1,477.4 718.1,504.5 723.0,508.2 M759.9,450.3 772.2,447.9 782.1,455.2 791.9,455.2 806.0,450.3 M759.9,479.9 762.4,492.2 772.2,499.6 777.2,504.5 M742.7,472.5 759.9,479.9 772.2,477.4 777.2,487.3 787.0,492.2 796.9,489.7 M772.2,477.4 762.4,465.1 759.9,450.3 M782.1,455.2 787.0,470.0 796.9,479.9 801.8,487.3 M777.2,504.5 769.8,514.3 764.9,524.2 752.5,521.7 745.2,509.4 M777.2,504.5 787.0,497.1 796.9,504.5 806.0,509.4 M752.5,521.7 751.3,543.9 757.5,553.7 757.5,566.1 747.6,573.4 740.2,575.9 732.8,568.5 730.4,556.2 740.2,548.8 745.2,547.6 751.3,543.9 M723.0,534.0 730.4,543.9 740.2,548.8 M715.6,534.0 715.6,552.5 723.0,552.5 730.4,556.2 M676.2,553.7 683.6,568.5 682.4,580.8 673.7,582.1 671.3,590.7 M659.0,551.3 676.2,552.5 686.1,534.0 M676.2,558.7 715.6,561.1 715.6,552.5 M649.1,564.8 654.0,558.7 659.0,551.3 M708.2,571.0 713.1,578.4 715.6,588.2 723.0,606.0 M688.5,578.4 713.1,578.4 M688.5,578.4 688.5,606.0 M757.5,566.1 769.8,563.6 782.1,558.7 787.0,551.3 796.9,553.7 M764.9,524.2 774.7,534.0 782.1,543.9 787.0,551.3 M747.6,573.4 752.5,588.2 759.9,593.1 762.4,606.0 M730.4,594.4 762.4,593.1 M782.1,578.4 787.0,583.3 787.0,593.1 M796.9,529.1 791.9,543.9 787.0,551.3 M631.9,590.7 631.9,606.0 M585.1,588.2 585.1,606.0 M555.5,588.2 555.5,606.0 M644.2,590.7 654.0,598.1 656.5,606.0 M671.3,590.7 663.9,590.7 661.4,578.4 656.5,566.1 M31.8,606.0 38.0,620.8 35.5,638.0 42.9,647.8 55.2,655.2 56.4,670.0 70.0,677.4 72.4,687.2 M6.0,620.8 20.8,618.3 31.8,615.8 M20.8,645.4 18.3,655.2 23.2,667.5 18.3,679.8 19.5,689.7 M47.8,613.4 60.1,618.3 67.5,625.7 74.9,638.0 70.0,647.8 77.4,651.5 87.2,655.2 M67.5,625.7 99.5,619.5 104.4,606.0 M89.7,638.0 94.6,625.7 99.5,619.5 M99.5,625.7 122.9,625.7 122.9,640.4 M147.5,606.0 148.7,620.8 147.5,640.4 146.3,662.6 145.0,679.8 M148.7,620.8 175.8,624.5 M215.2,606.0 215.2,620.8 248.4,623.2 248.4,606.0 M215.2,620.8 215.2,640.4 202.9,647.8 M248.4,623.2 285.8,624.5 M55.2,655.2 70.0,650.3 79.8,652.8 M84.7,655.2 87.2,674.9 94.6,677.4 99.5,687.2 100.7,699.5 M23.2,667.5 35.5,672.4 55.2,671.2 57.7,677.4 M72.4,687.2 87.2,677.4 M72.4,687.2 77.4,702.0 84.7,704.4 M99.5,687.2 116.7,692.1 118.0,677.4 114.3,665.1 104.4,667.5 M116.7,692.1 136.4,692.1 M126.6,679.8 145.0,682.3 158.6,684.7 M158.6,667.5 156.1,687.2 161.0,699.5 165.9,714.3 M145.0,662.6 158.6,667.5 178.2,663.8 M100.7,699.5 104.4,703.2 109.3,711.8 119.2,721.6 129.0,734.0 138.9,743.8 M77.4,719.2 87.2,711.8 100.7,699.5 M163.5,687.2 175.8,697.0 188.1,702.0 M141.3,662.6 138.9,674.9 126.6,679.8 M365.7,606.0 366.9,618.3 371.8,628.1 374.3,633.1 M405.0,606.0 405.0,646.6 M434.6,606.0 434.6,647.8 M460.4,606.0 460.4,619.5 M492.4,606.0 494.8,610.9 504.7,612.2 505.9,617.1 M470.2,620.8 469.0,630.6 472.7,640.4 465.3,645.4 462.9,655.2 M505.9,617.1 505.9,633.1 502.2,634.3 502.2,645.4 475.2,645.4 M505.9,633.1 545.8,629.4 M509.6,634.3 509.6,689.7 M536.7,679.8 545.8,682.3 M526.8,662.6 531.7,672.4 526.8,679.8 531.7,689.7 M585.1,606.0 583.9,622.0 M606.0,606.0 606.0,623.2 M631.9,606.0 631.9,624.5 M654.0,610.9 663.9,606.0 M673.7,606.0 683.6,610.9 698.4,613.4 703.3,620.8 708.2,629.4 M650.4,617.1 654.0,610.9 M725.5,606.0 725.5,630.6 M535.8,630.6 538.3,642.9 533.4,655.2 528.5,670.0 526.0,679.9 M538.3,642.9 558.0,655.2 560.5,670.0 575.2,684.8 M558.0,655.2 582.6,656.5 607.3,657.7 606.0,638.0 609.7,631.9 M562.9,645.4 575.2,640.5 582.6,640.0 M607.3,657.7 619.6,658.9 614.6,672.5 617.1,678.6 M639.3,626.9 634.3,638.0 627.0,652.8 624.5,658.9 651.6,658.9 660.2,661.4 660.2,699.6 683.6,699.6 693.4,700.8 M624.5,658.9 619.6,658.9 M668.8,652.8 667.6,667.6 676.2,674.9 686.1,677.4 688.5,687.3 683.6,699.6 M667.6,667.6 660.2,667.6 M708.2,638.0 710.7,650.3 703.3,654.0 M702.1,661.4 702.1,687.3 693.4,692.2 693.4,700.8 688.5,709.4 688.5,721.7 683.6,729.1 686.1,736.5 678.7,743.9 M702.1,687.3 713.1,697.1 713.1,724.2 730.4,729.1 730.4,753.7 721.8,753.7 721.8,768.5 710.7,771.0 M713.1,697.1 723.0,689.7 735.3,682.3 747.6,672.5 756.2,671.3 M726.7,662.6 726.7,671.3 756.2,671.3 756.2,651.6 M756.2,671.3 756.2,704.5 772.2,704.5 784.6,702.0 M756.2,704.5 757.5,726.7 772.2,729.1 772.2,726.7 M730.4,729.1 757.5,726.7 M730.4,753.7 747.6,751.3 772.2,748.8 787.0,750.1 M772.2,729.1 772.2,748.8 M721.8,768.5 740.2,778.4 742.7,791.9 M772.2,773.4 787.0,775.9 787.0,753.7 M782.1,630.6 772.2,640.5 762.4,650.3 756.2,651.6 M796.9,657.7 806.0,658.9 M796.9,679.9 806.0,679.9 M799.3,729.1 806.0,734.0" fill="none" stroke="#5b5e5e" stroke-width="0.99"/>
<path d="M5.4,706.3 8.5,705.1 11.5,703.2 13.6,702.3 15.9,702.3 18.3,699.6 20.8,698.6 24.5,699.3 28.2,698.6 30.0,700.2 29.4,703.0 26.9,704.5 26.3,706.9 28.2,708.4 31.9,707.6 34.9,707.2 38.0,706.7 40.5,706.2 43.0,706.4 45.4,706.0 46.0,704.5 47.9,704.7 48.5,706.7 45.4,707.6 45.2,711.9 44.2,715.8 47.3,716.2 50.3,715.8 51.3,719.3 52.2,722.9 50.9,726.0 55.3,725.2 58.9,724.2 60.8,726.0 63.9,726.9 67.6,728.5 70.0,726.6 71.9,727.3 72.5,730.3 73.5,732.3 75.0,734.0 76.4,737.7 78.7,740.8 79.9,743.9 81.1,747.0 83.0,748.8 84.8,745.1 86.0,742.0 88.5,740.8 91.0,742.7 94.7,743.6 97.7,745.1 100.8,747.0 103.3,748.8 105.7,751.3 106.4,755.0 109.4,756.2 113.1,757.7 112.7,755.3 112.9,753.1 114.7,751.1 114.4,748.8 116.1,746.8 118.2,745.2 120.5,743.9 123.4,743.5 125.4,741.5 127.9,740.4 130.9,741.5 134.1,741.4 136.1,742.7 138.0,744.3 140.2,745.4 143.3,745.6 146.0,747.0 146.0,747.0 148.0,745.6 149.7,743.9 149.7,741.3 148.5,739.0 149.0,736.7 149.9,734.6 150.2,732.4 149.7,729.9 150.9,727.9 150.8,725.3 149.7,722.9 151.6,721.9 153.4,720.5 156.1,722.0 158.3,724.2 161.3,725.4 163.2,727.9 165.4,729.7 168.2,730.3 171.2,729.7 174.3,729.1 176.6,730.7 179.2,731.6 179.4,734.2 180.5,736.6 181.7,739.0 181.6,741.6 182.9,743.9 186.6,744.5 189.8,745.2 192.8,746.3 194.6,748.0 196.9,748.7 198.9,750.0 200.5,752.3 202.6,753.9 205.1,755.0 207.6,757.7 208.3,760.6 207.6,763.6 209.8,762.9 212.0,763.1 214.2,764.4 216.4,763.5 218.7,763.8 220.9,763.2 223.1,763.6 225.3,763.4 227.5,763.3 229.7,763.7 232.0,763.7 234.2,764.3 236.4,763.9 238.6,764.4 240.8,763.6 241.5,760.7 241.7,757.8 240.8,755.0 237.1,753.7 234.7,752.8 232.2,752.5 230.5,751.0 229.7,748.8 229.1,746.1 227.3,743.9 224.8,742.7 222.1,742.5 219.9,743.9 217.7,742.0 215.0,741.4 212.5,740.1 210.0,739.0 207.7,737.7 205.1,737.1 202.6,737.3 200.2,736.5 200.1,733.9 198.9,731.6 197.2,729.6 195.3,727.9 193.0,727.0 190.7,726.1 189.1,724.2 188.4,721.4 186.6,719.3 184.5,717.5 181.7,717.4 182.9,715.6 184.7,714.1 187.2,714.4 189.1,713.1 187.9,709.4 189.6,708.0 191.6,706.9 191.6,704.3 192.8,702.0 195.9,702.3 198.9,703.2 200.2,699.6 202.9,698.8 205.1,697.1 206.9,694.9 207.6,692.2 205.6,690.1 205.1,687.2 204.7,684.1 203.9,681.1 202.5,683.0 200.2,683.5 198.6,685.8 197.7,688.5 197.4,690.7 196.5,692.8 193.8,693.1 191.6,694.6 189.5,692.6 186.6,692.2 186.6,688.5 184.2,688.8 181.7,689.1 180.0,687.1 177.4,686.6 176.8,682.3 178.4,680.8 180.5,679.9 182.1,677.6 184.7,676.7 186.6,674.9 188.2,672.6 190.4,671.2 192.8,670.0 194.7,667.4 196.8,665.1 198.8,663.0 200.5,660.7 202.8,661.8 204.7,663.3 206.0,665.6 207.8,663.4 208.5,660.6 210.1,658.6 212.2,656.9 214.6,654.5 212.2,652.6 214.6,650.8 218.3,650.5 220.8,652.0 219.5,655.7 222.2,655.9 224.5,654.5 226.8,654.1 228.5,652.2 230.6,651.4 233.1,650.3 235.6,649.4 238.0,648.3 240.5,645.6 243.6,645.7 246.6,645.2 249.4,645.7 252.2,645.9 253.4,648.3 255.5,649.6 257.7,650.8 261.4,653.0 263.9,652.6 266.3,651.8 270.0,650.5 272.2,652.3 275.0,652.6 277.4,653.6 279.9,654.5 282.3,652.3 284.1,650.8 286.0,649.6 288.6,649.2 291.0,648.1 294.7,649.6 296.3,651.1 297.1,653.2 300.8,654.5 304.5,653.2 306.4,649.6 306.2,647.1 307.6,644.7 307.0,642.2 307.2,639.7 307.5,637.2 307.6,634.8 307.4,632.1 308.7,629.8 309.4,627.4 310.8,625.0 311.9,622.5 313.7,621.5 316.8,623.7 319.9,625.5 321.2,627.6 320.5,630.1 321.1,632.3 320.3,635.3 319.9,638.5 321.6,641.3 321.7,644.6 323.7,647.2 326.1,649.6 327.6,652.0 329.1,654.5 331.4,656.6 334.1,658.2 335.3,660.6 338.0,660.2 340.7,660.7 343.4,660.6 346.0,660.0 347.9,657.8 350.8,656.9 353.0,655.4 355.8,655.7 358.4,655.4 360.6,653.9 363.0,652.7 365.5,652.2 368.1,651.7 370.5,650.8 372.9,649.9 375.4,649.4 377.8,648.8 380.3,648.6 382.8,648.0 385.3,648.1 387.7,647.3 390.2,647.3 392.6,647.1 395.1,647.8 397.6,646.5 400.0,647.3 402.5,647.6 404.9,647.9 407.4,647.3 409.9,647.7 412.4,647.4 414.8,648.7 417.3,647.9 419.7,648.6 422.3,648.3 424.7,648.9 427.1,649.7 429.6,649.6 432.2,649.3 434.6,650.2 437.0,650.6 439.4,651.4 441.7,652.7 444.4,652.7 446.8,653.5 449.1,654.9 451.9,654.6 454.2,656.0 456.8,656.8 459.0,658.3 461.6,659.2 463.7,661.1 466.6,661.7 469.0,663.1 471.6,663.9 474.0,665.0 476.0,666.8 478.0,668.7 480.4,670.2 482.0,672.5 483.7,674.6 485.7,676.2 488.2,677.4 490.5,678.4 492.5,680.0 494.3,681.7 496.1,683.4 498.3,684.4 500.5,685.4 502.6,687.4 505.4,688.5 507.4,689.5 509.1,691.0 511.6,694.0 513.3,695.5 514.0,697.7 515.0,699.8 515.3,702.0 515.5,706.3 515.3,710.7 518.9,711.3 521.5,711.5 523.9,710.7 526.2,709.3 528.8,708.8 531.9,708.2 535.0,708.2 537.4,707.1 539.9,706.3 542.3,705.0 544.8,703.9 547.2,702.8 549.7,702.0 552.5,701.5 554.7,699.6 556.8,697.8 559.6,697.1 561.6,694.8 564.5,694.0 567.3,693.5 569.4,691.6 572.1,691.3 574.4,689.7 578.1,687.9 579.3,684.2 581.7,682.9 583.7,681.6 584.2,679.3 586.7,676.8 590.4,674.9 594.1,673.7 597.8,673.1 599.7,674.2 601.5,675.6 603.8,676.1 606.0,674.9 609.2,675.5 612.2,674.5 614.3,675.5 615.5,677.8 617.6,678.9 619.1,680.6 621.1,681.6 623.1,682.6 625.0,683.8 627.5,684.8 629.7,686.2 631.9,687.8 634.4,689.4 636.7,691.1 638.3,693.7 639.3,696.2 640.9,698.4 641.7,701.1 642.9,703.4 645.6,704.5 646.7,707.0 648.1,708.9 650.1,710.0 651.7,711.6 654.0,712.4 655.5,715.3 658.0,717.3 657.2,719.7 657.7,722.2 657.7,724.7 660.2,726.5 660.8,729.6 662.9,731.6 665.4,732.9 667.4,734.9 669.3,737.0 671.3,739.2 673.7,740.9 675.4,743.2 677.2,745.3 678.7,747.6 678.8,749.9 680.1,751.8 681.1,753.7 681.3,756.2 681.3,758.7 680.6,761.1 683.0,760.7 684.8,759.2 686.6,757.7 688.5,756.2 691.0,756.9 693.5,756.3 695.9,756.7 698.7,758.0 700.8,760.1 702.0,763.1 703.3,766.1 703.1,768.6 704.7,770.9 704.5,773.4 705.5,775.6 706.7,777.5 708.7,778.9 710.0,781.0 712.2,782.3 712.4,784.7 714.6,786.3 714.6,788.7 713.7,791.5 713.1,794.4 713.1,796.7 713.1,799.0 713.1,801.2 713.1,803.5 713.1,805.8 713.1,808.1 713.1,810.4 710.9,810.4 708.7,810.4 706.5,810.4 704.3,810.4 702.1,810.4 699.9,810.4 697.7,810.4 695.5,810.4 693.3,810.4 691.1,810.4 688.9,810.4 686.7,810.4 684.5,810.4 682.3,810.5 680.1,810.5 677.9,810.5 675.7,810.5 673.5,810.5 671.3,810.5 669.1,810.5 666.9,810.5 664.7,810.5 662.5,810.5 660.3,810.5 658.1,810.5 655.9,810.5 653.7,810.5 651.5,810.5 649.3,810.5 647.1,810.5 644.9,810.5 642.7,810.5 640.5,810.5 638.3,810.6 636.1,810.6 633.9,810.6 631.7,810.6 629.5,810.6 627.3,810.6 625.1,810.6 622.9,810.6 620.7,810.6 618.5,810.6 616.3,810.6 614.1,810.6 611.9,810.6 609.7,810.6 607.5,810.6 605.3,810.6 603.1,810.6 600.9,810.6 598.7,810.6 596.5,810.6 594.3,810.7 592.1,810.7 589.9,810.7 587.7,810.7 585.5,810.7 583.3,810.7 581.1,810.7 578.9,810.7 576.7,810.7 574.5,810.7 572.3,810.7 570.1,810.7 567.9,810.7 565.7,810.7 563.5,810.7 561.3,810.7 559.1,810.7 556.9,810.7 554.7,810.7 552.5,810.7 550.3,810.8 548.1,810.8 545.9,810.8 543.7,810.8 541.5,810.8 539.3,810.8 537.1,810.8 534.9,810.8 532.7,810.8 530.5,810.8 528.3,810.8 526.1,810.8 523.9,810.8 521.7,810.8 519.5,810.8 517.3,810.8 515.0,810.8 512.8,810.8 510.6,810.8 508.4,810.8 506.2,810.9 504.0,810.9 501.8,810.9 499.6,810.9 497.4,810.9 495.2,810.9 493.0,810.9 490.8,810.9 488.6,810.9 486.4,810.9 484.2,810.9 482.0,810.9 479.8,810.9 477.6,810.9 475.4,810.9 473.2,810.9 471.0,810.9 468.8,810.9 466.6,810.9 464.4,810.9 462.2,811.0 460.0,811.0 457.8,811.0 455.6,811.0 453.4,811.0 451.2,811.0 449.0,811.0 446.8,811.0 444.6,811.0 442.4,811.0 440.2,811.0 438.0,811.0 435.8,811.0 433.6,811.0 431.4,811.0 429.2,811.0 427.0,811.0 424.8,811.0 422.6,811.0 420.4,811.0 418.2,811.1 416.0,811.1 413.8,811.1 411.6,811.1 409.4,811.1 407.2,811.1 405.0,811.1 402.8,811.1 400.6,811.1 398.4,811.1 396.2,811.1 394.0,811.1 391.8,811.1 389.6,811.1 387.4,811.1 385.2,811.1 383.0,811.1 380.8,811.1 378.6,811.1 376.4,811.1 374.2,811.2 372.0,811.2 369.8,811.2 367.6,811.2 365.4,811.2 363.2,811.2 361.0,811.2 358.8,811.2 356.6,811.2 354.4,811.2 352.2,811.2 350.0,811.2 347.8,811.2 345.6,811.2 343.4,811.2 341.2,811.2 339.0,811.2 336.8,811.2 334.6,811.2 332.4,811.2 330.2,811.3 328.0,811.3 325.8,811.3 323.6,811.3 321.4,811.3 319.2,811.3 317.0,811.3 314.8,811.3 312.6,811.3 310.4,811.3 308.1,811.3 305.9,811.3 303.7,811.3 301.5,811.3 299.3,811.3 297.1,811.3 294.9,811.3 292.7,811.3 290.5,811.3 288.3,811.3 286.1,811.4 283.9,811.4 281.7,811.4 279.5,811.4 277.3,811.4 275.1,811.4 272.9,811.4 270.7,811.4 268.5,811.4 266.3,811.4 264.1,811.4 261.9,811.4 259.7,811.4 257.5,811.4 255.3,811.4 253.1,811.4 250.9,811.4 248.7,811.4 246.5,811.4 244.3,811.4 242.1,811.5 239.9,811.5 237.7,811.5 235.5,811.5 233.3,811.5 231.1,811.5 228.9,811.5 226.7,811.5 224.5,811.5 222.3,811.5 220.1,811.5 217.9,811.5 215.7,811.5 213.5,811.5 211.3,811.5 209.1,811.5 206.9,811.5 204.7,811.5 202.5,811.5 200.3,811.5 198.1,811.6 195.9,811.6 193.7,811.6 191.5,811.6 189.3,811.6 187.1,811.6 184.9,811.6 182.7,811.6 180.5,811.6 178.3,811.6 176.1,811.6 173.9,811.6 171.7,811.6 169.5,811.6 167.3,811.6 165.1,811.6 162.9,811.6 160.7,811.6 158.5,811.6 156.3,811.6 154.1,811.7 151.9,811.7 149.7,811.7 147.5,811.7 145.3,811.7 143.1,811.7 140.9,811.7 138.7,811.7 136.5,811.7 134.3,811.7 132.1,811.7 129.9,811.7 127.7,811.7 125.5,811.7 123.3,811.7 121.1,811.7 118.9,811.7 116.7,811.7 114.5,811.7 112.3,811.7 110.1,811.8 107.9,811.8 105.7,811.8 103.5,811.8 101.2,811.8 99.0,811.8 96.8,811.8 94.6,811.8 92.4,811.8 90.2,811.8 88.0,811.8 85.8,811.8 83.6,811.8 81.4,811.8 79.2,811.8 77.0,811.8 74.8,811.8 72.6,811.8 70.4,811.8 68.2,811.8 66.0,811.9 63.8,811.9 61.6,811.9 59.4,811.9 57.2,811.9 55.0,811.9 52.8,811.9 50.6,811.9 48.4,811.9 46.2,811.9 44.0,811.9 41.8,811.9 39.6,811.9 37.4,811.9 35.2,811.9 33.0,811.9 30.8,811.9 28.6,811.9 26.4,811.9 24.2,811.9 22.0,812.0 19.8,812.0 17.6,812.0 15.4,812.0 13.2,812.0 11.0,812.0 8.8,812.0 6.6,812.0 4.4,812.0 2.2,812.0 0.0,812.0 0.0,809.8 0.0,807.5 0.0,805.3 0.0,803.1 0.0,800.8 0.0,798.6 0.0,796.4 0.0,794.1 0.0,791.9 0.0,789.7 0.0,787.4 0.0,785.2 0.0,783.0 0.0,780.7 0.0,778.5 0.0,776.3 0.0,774.0 0.0,771.8 0.0,769.6 0.0,767.3 0.0,765.1 0.0,762.9 0.0,760.6 0.0,758.4 0.0,756.2 0.0,753.9 0.0,751.7 0.0,749.5 0.0,747.2 0.0,745.0 0.3,742.7 0.6,740.5 1.0,738.2 1.3,735.9 1.6,733.6 1.9,731.4 2.2,729.1 2.5,726.8 2.9,724.5 3.2,722.3 3.5,720.0 3.8,717.7 4.1,715.4 4.4,713.2 4.8,710.9 5.1,708.6Z" fill="#004164" stroke="#000" stroke-width="0.99" stroke-linejoin="round"/>
<path d="M343.4,651.8 344.9,652.3 346.5,655.1 348.9,653.2 351.4,650.8 353.9,651.8 355.7,648.6 357.5,646.1 360.0,642.8 362.5,643.4 362.5,645.9 359.4,646.8 357.5,650.2 355.7,653.5 353.2,655.5 349.5,656.9 345.9,657.6 344.0,656.3 343.8,654.0Z" fill="#004164" stroke="#000" stroke-width="0.99"/>
<path d="M365.6,650.2 369.2,648.9 371.1,647.7 372.9,646.5 375.4,644.0 376.4,641.9 377.3,639.7 377.9,636.0 376.0,634.2 376.6,631.7 378.5,632.9 380.3,634.2 380.9,636.6 382.2,638.5 382.8,642.8 384.6,642.8 385.3,638.5 386.5,635.4 388.3,631.7 390.2,632.3 389.6,636.0 388.3,639.1 390.8,640.9 393.3,642.8 397.6,643.1 398.8,644.0 395.1,644.6 392.0,645.2 388.9,646.5 385.3,647.7 381.6,648.6 377.9,650.2 375.2,650.7 372.9,652.3 369.2,653.5 366.8,652.3Z" fill="#004164" stroke="#000" stroke-width="0.99"/>
<path d="M417.9,644.0 419.7,642.2 421.0,644.6 423.4,644.4 425.9,642.8 427.7,640.3 427.1,637.9 429.0,638.5 430.2,639.7 432.0,638.5 431.4,640.9 433.3,642.8 437.0,642.4 440.7,641.2 444.4,640.3 447.4,639.1 449.3,639.7 449.9,642.2 452.4,641.5 453.6,642.8 454.2,645.2 455.4,647.1 454.2,648.9 451.7,648.6 449.9,646.5 447.4,645.9 444.4,645.6 441.9,646.5 440.1,647.7 437.0,647.3 433.3,646.1 429.6,646.5 425.9,647.3 422.2,646.8 419.7,646.1Z" fill="#004164" stroke="#000" stroke-width="0.99"/>
<path d="M474.0,658.9 477.1,657.7 480.8,658.9 483.2,661.4 484.5,664.5 486.9,662.0 489.4,659.6 492.5,657.7 493.7,654.6 495.6,652.2 497.4,652.8 498.6,654.0 496.2,655.9 494.3,658.9 491.9,660.8 488.8,663.2 486.3,666.3 484.5,668.2 486.9,670.0 490.6,671.3 494.3,673.1 498.0,673.7 499.2,676.8 501.1,679.3 504.2,678.6 506.6,678.0 508.5,679.3 507.3,681.1 503.6,681.7 500.5,681.7 498.0,679.3 496.2,676.8 493.7,674.9 490.0,673.1 486.9,672.5 483.9,670.6 482.0,667.6 481.4,665.1 478.9,662.6 476.5,662.3 474.6,661.4Z" fill="#004164" stroke="#000" stroke-width="0.99"/>
<path d="M507.3,695.3 508.5,694.0 510.3,695.3 512.8,697.1 514.6,700.2 515.3,703.9 515.7,706.4 515.0,708.8 513.4,710.0 511.6,708.2 510.9,705.9 509.7,703.9 507.9,700.2 506.9,697.1Z" fill="#004164" stroke="#000" stroke-width="0.99"/>
<path d="M579.3,684.2 581.1,686.0 584.2,686.6 587.3,686.0 587.3,689.1 586.1,691.6 583.0,692.2 580.5,691.0 580.7,688.6 579.0,686.6Z" fill="#004164" stroke="#000" stroke-width="0.99"/>
<path d="M800.2,560.8 803.1,560.6 806.0,560.8 806.0,563.0 806.1,565.2 806.1,567.4 806.1,569.6 805.8,571.8 806.3,574.0 805.8,576.2 806.7,578.4 806.3,580.6 806.2,582.8 806.5,585.0 805.7,587.2 806.3,589.4 805.6,591.7 805.4,593.9 806.3,596.1 805.5,598.3 805.6,600.5 805.8,602.7 806.7,604.9 806.1,607.1 805.8,609.3 806.3,611.5 806.4,613.7 806.3,615.9 806.3,618.1 805.6,620.3 806.2,622.5 806.1,624.7 805.8,626.9 805.4,629.1 806.3,631.3 806.6,633.5 805.3,635.8 805.5,638.0 805.6,640.2 806.0,642.4 806.4,644.6 806.5,646.8 806.3,649.0 806.1,651.2 806.6,653.4 806.0,655.6 803.6,655.6 803.6,652.9 803.4,650.2 802.9,647.5 801.5,644.9 801.5,642.1 802.3,639.4 802.2,636.6 801.5,634.4 801.4,632.0 800.2,629.9 800.4,627.6 801.0,625.4 800.9,623.1 801.0,620.8 801.5,618.6 801.5,616.3 801.1,614.1 800.0,611.9 800.2,609.5 799.9,607.2 800.3,605.0 800.9,602.8 800.3,600.5 799.8,598.3 799.5,596.0 800.0,593.3 800.6,590.6 800.9,587.9 800.1,585.2 799.4,582.5 799.1,579.7 799.7,577.0 800.9,574.5 800.9,571.6 800.8,569.3 800.2,567.1 799.5,564.8Z" fill="#004164" stroke="#000" stroke-width="0.99"/>
<path d="M195.6,667.6 193.1,669.0 190.7,670.5 188.6,671.4 187.0,673.0 184.6,674.8 183.3,677.4 181.4,678.9 179.0,679.6 177.1,681.1 176.2,683.5 175.9,686.0 177.6,688.0 179.6,689.7 182.8,689.8 185.8,691.0 187.9,689.1 190.7,688.5 192.6,690.2 194.4,692.2 196.4,691.2 198.1,689.7 199.0,687.1 200.5,684.8 201.8,682.3 203.0,679.9 204.2,676.2 203.4,673.8 203.0,671.3 201.4,669.6 199.3,668.8Z" fill="#004164" stroke="#000" stroke-width="0.99"/>
<path d="M522.6,711.3 527.6,710.7 532.5,711.9 531.3,715.0 528.2,716.2 525.1,714.3Z" fill="#5c4f49" stroke="#000" stroke-width="0.99"/>
<path d="M15.9,719.3 19.5,717.4 24.5,716.2 28.8,717.4 32.5,719.3 35.6,720.5 39.2,721.7 37.4,724.2 34.9,726.0 33.7,728.5 30.6,730.1 27.5,728.5 24.5,726.6 20.8,724.2 17.7,722.3Z" fill="#5c4f49" stroke="#000" stroke-width="0.99"/>
<path d="M65.1,742.7 67.6,745.1 70.0,748.8 75.0,751.3 79.9,752.3 81.7,750.0 79.9,746.3 77.4,742.7 74.3,739.6 71.3,740.8 68.8,743.9Z" fill="#5c4f49" stroke="#000" stroke-width="0.99"/>
<path d="M299.2,60.2 302.9,56.5 309.1,55.2 314.0,58.2 315.2,63.9 318.9,70.0 323.9,71.3 322.1,76.2 318.9,78.6 321.4,84.8 323.9,91.0 323.1,95.9 320.2,91.0 316.5,86.0 314.0,77.4 312.3,68.8 309.8,62.1 305.4,60.7 302.9,63.1Z M368.2,261.4 371.9,258.5 376.8,260.2 381.7,263.9 387.9,266.3 391.6,270.0 395.3,273.7 396.0,276.9 392.8,274.9 387.9,271.3 381.7,267.6 376.8,264.6 371.9,262.1 368.9,263.1Z M438.4,375.9 440.8,369.8 444.5,367.3 447.0,363.6 449.5,363.1 450.7,367.3 448.2,369.8 444.5,373.4 442.1,377.1 439.6,377.9Z M604.8,307.0 608.5,304.5 612.2,305.7 613.4,300.8 612.2,294.6 612.7,288.5 615.1,285.3 617.1,289.7 620.1,286.0 622.5,291.0 625.7,292.2 627.5,294.2 624.5,296.6 622.5,299.6 619.6,303.3 616.6,307.0 613.4,310.7 608.5,313.1 606.0,310.7Z M423.6,413.4 426.1,415.8 427.3,420.8 428.5,425.7 431.5,429.4 431.0,434.3 429.0,432.6 427.3,428.2 425.6,423.2 424.1,418.3Z M526.0,502.0 529.0,507.0 531.4,504.5 532.2,511.9 529.7,518.0 532.2,524.2 535.8,526.7 532.2,530.4 533.4,536.5 529.7,537.7 527.2,532.8 526.0,524.2 523.0,514.3 524.0,504.5Z M121.7,658.9 124.2,654.8 129.1,652.3 134.0,654.0 136.5,658.9 134.5,664.6 130.4,667.6 125.4,668.1 121.7,665.1Z M140.9,705.7 145.1,703.3 146.4,698.3 143.9,695.9 148.8,694.6 153.3,697.6 155.0,703.3 153.3,707.5 148.8,710.7 146.4,714.3 142.7,713.1 140.2,709.4Z M42.4,681.1 45.4,679.9 49.1,682.8 51.6,687.3 49.8,689.7 46.6,688.5 43.4,684.8Z M57.2,691.0 58.9,684.8 61.4,691.0 64.6,695.9 68.8,700.8 76.2,703.3 82.3,704.5 84.8,708.2 81.1,710.7 74.9,707.5 68.8,707.0 63.9,704.5 60.2,699.6 57.7,695.1Z M541.3,612.2 542.7,608.0 546.9,606.0 555.5,606.0 555.1,609.7 559.2,610.4 562.9,609.7 563.4,612.9 559.2,613.9 555.5,615.8 550.6,617.1 546.9,619.5 543.2,618.3Z M784.6,730.4 788.3,736.5 793.2,743.9 796.9,750.1 795.6,755.0 790.7,753.7 787.0,747.6 784.6,740.2Z" fill="#2f4d6e"/>
<path d="M785.6,654.2 784.2,659.7 786.6,665.1 786.0,669.1 784.6,674.6 784.2,680.0 786.6,684.0 790.0,688.1 792.1,690.8 791.4,694.9 792.7,700.3 794.8,706.0 M784.6,669.8 781.9,671.8 779.9,673.9 M785.6,654.2 788.0,650.2 792.1,648.1 797.5,646.8 802.9,646.1" fill="none" stroke="#000" stroke-width="3.4" stroke-linejoin="round"/>
<path d="M785.6,654.2 784.2,659.7 786.6,665.1 786.0,669.1 784.6,674.6 784.2,680.0 786.6,684.0 790.0,688.1 792.1,690.8 791.4,694.9 792.7,700.3 794.8,706.0 M784.6,669.8 781.9,671.8 779.9,673.9 M785.6,654.2 788.0,650.2 792.1,648.1 797.5,646.8 802.9,646.1" fill="none" stroke="#005080" stroke-width="1.6" stroke-linejoin="round"/>
<path d="M212 675h3v1h-3zM201 721h1v1h-1zM208 674h3v2h-3zM207 705h3v1h-3zM208 682h1v3h-1zM208 708h2v3h-2zM196 706h2v2h-2zM215 688h1v1h-1zM226 675h3v3h-3zM220 691h2v3h-2zM218 675h1v2h-1zM220 688h2v2h-2zM217 679h1v2h-1zM222 676h2v2h-2zM222 688h2v2h-2zM220 682h2v1h-2zM206 708h2v1h-2zM219 694h2v2h-2zM211 674h1v1h-1zM210 675h1v3h-1zM203 700h1v1h-1zM206 680h3v1h-3zM195 710h1v2h-1zM224 692h1v3h-1zM205 709h3v1h-3zM193 713h2v2h-2zM215 692h2v1h-2zM191 708h3v1h-3zM216 700h1v2h-1zM197 719h2v2h-2zM219 680h3v2h-3zM198 704h1v1h-1zM202 723h1v1h-1zM209 686h2v1h-2zM222 679h1v3h-1zM210 678h1v2h-1zM206 700h1v3h-1zM223 683h2v1h-2zM213 697h1v2h-1zM223 680h2v1h-2zM220 680h2v3h-2zM214 694h3v3h-3zM226 678h1v1h-1zM194 725h1v2h-1zM200 703h3v3h-3zM206 685h1v1h-1zM211 703h1v2h-1zM213 687h1v2h-1zM200 701h1v1h-1zM222 697h1v1h-1zM199 701h2v3h-2zM203 701h1v1h-1zM209 703h1v3h-1zM215 702h2v3h-2zM206 701h1v3h-1zM211 676h1v1h-1zM216 699h1v2h-1zM211 683h3v1h-3zM210 679h2v1h-2zM227 677h1v2h-1zM207 690h1v2h-1zM203 720h2v2h-2zM216 687h2v1h-2zM211 688h1v2h-1zM204 698h2v1h-2zM225 683h1v2h-1zM217 695h3v3h-3zM200 708h1v2h-1zM204 711h1v1h-1zM216 696h2v3h-2zM194 716h2v2h-2zM198 712h3v1h-3zM203 706h1v1h-1zM217 698h3v1h-3zM206 697h1v1h-1zM206 706h2v2h-2zM205 711h2v1h-2zM213 683h2v3h-2zM204 683h1v1h-1zM194 724h1v3h-1zM209 696h1v1h-1zM201 724h3v1h-3zM217 689h2v1h-2zM224 682h2v2h-2zM200 720h2v1h-2zM203 719h1v2h-1zM226 673h2v2h-2zM186 714h2v2h-2zM195 712h1v3h-1zM222 699h3v1h-3zM200 710h2v3h-2zM227 681h1v2h-1zM223 685h3v1h-3zM194 725h1v2h-1zM224 673h2v1h-2zM199 723h2v3h-2zM210 684h2v2h-2zM209 710h1v1h-1zM210 675h1v2h-1zM200 704h3v1h-3zM208 693h1v1h-1zM207 709h2v1h-2zM219 689h1v2h-1zM210 709h1v3h-1zM210 683h2v1h-2zM219 682h3v1h-3zM203 722h2v2h-2zM202 708h2v1h-2zM219 701h1v1h-1zM185 715h3v1h-3zM226 679h1v3h-1zM210 686h2v3h-2zM219 679h3v2h-3zM223 681h2v1h-2zM211 695h2v2h-2zM192 708h1v2h-1zM193 709h3v2h-3zM216 684h2v3h-2zM210 673h1v1h-1zM195 702h3v1h-3zM198 721h1v1h-1zM194 720h1v1h-1zM208 692h3v2h-3zM205 700h1v1h-1zM206 695h1v1h-1zM210 701h2v3h-2zM216 699h2v1h-2zM192 716h1v2h-1zM199 707h2v3h-2zM218 694h3v1h-3zM188 710h1v1h-1zM216 676h2v2h-2zM186 716h1v2h-1zM215 693h2v3h-2zM202 717h2v2h-2zM206 684h1v3h-1zM191 717h1v1h-1zM205 706h1v2h-1zM217 700h3v1h-3zM194 725h3v1h-3zM223 685h2v1h-2zM211 692h2v3h-2zM216 681h2v2h-2zM223 685h1v2h-1zM206 680h2v1h-2zM189 710h1v2h-1zM194 724h2v1h-2zM201 705h2v1h-2zM211 706h1v1h-1zM211 677h2v1h-2zM203 708h2v3h-2zM225 682h2v1h-2zM189 718h1v3h-1zM221 698h1v2h-1zM210 709h2v2h-2zM213 706h1v1h-1zM200 728h1v2h-1zM190 709h1v1h-1zM219 699h2v3h-2zM218 699h1v2h-1zM213 700h2v2h-2zM221 674h3v2h-3zM188 721h3v1h-3zM218 683h2v3h-2zM220 683h1v3h-1zM201 721h2v2h-2zM214 686h1v3h-1zM216 680h2v2h-2zM183 715h2v1h-2zM210 691h2v2h-2zM201 704h2v2h-2zM204 678h1v2h-1zM200 704h2v3h-2zM210 708h3v1h-3zM212 698h1v1h-1zM222 696h1v1h-1zM208 686h2v1h-2zM211 684h1v1h-1zM208 698h1v1h-1zM188 717h2v3h-2zM219 676h2v2h-2zM189 723h2v3h-2zM198 705h2v2h-2zM188 719h2v1h-2zM218 705h2v2h-2zM209 689h2v1h-2zM213 707h1v2h-1zM208 687h3v2h-3zM219 683h1v2h-1zM213 699h1v2h-1zM207 703h2v1h-2zM204 706h1v1h-1zM190 713h2v3h-2zM200 702h1v1h-1zM218 680h3v1h-3zM208 687h2v2h-2zM202 707h3v1h-3zM222 698h1v3h-1zM220 674h3v2h-3zM188 716h1v2h-1zM202 710h2v2h-2zM197 715h1v2h-1zM220 691h1v2h-1zM212 683h2v2h-2zM191 705h1v1h-1zM217 681h1v3h-1zM211 682h2v1h-2zM214 702h1v3h-1zM197 722h2v1h-2zM199 707h1v2h-1zM202 702h1v2h-1zM196 714h2v3h-2zM205 703h3v1h-3zM226 684h1v1h-1zM193 720h1v1h-1zM214 683h1v3h-1zM214 707h3v3h-3zM227 674h2v2h-2zM200 705h2v3h-2zM213 692h2v1h-2zM201 701h1v1h-1zM210 709h1v3h-1zM202 702h2v2h-2zM210 705h2v1h-2zM198 725h2v3h-2zM220 673h2v1h-2zM200 726h1v1h-1zM222 684h1v1h-1zM216 677h1v1h-1zM212 679h1v3h-1zM194 721h1v2h-1zM181 717h3v1h-3zM201 718h3v3h-3zM209 710h1v2h-1zM195 703h1v2h-1zM223 689h3v2h-3zM205 712h2v2h-2zM209 692h1v1h-1zM202 708h3v2h-3zM216 676h2v2h-2zM205 682h1v1h-1zM209 692h1v2h-1zM209 680h3v3h-3zM217 690h1v2h-1zM217 673h1v3h-1zM209 681h1v2h-1zM207 678h3v2h-3zM201 726h3v1h-3zM218 704h2v1h-2zM198 714h2v3h-2zM209 693h1v2h-1zM191 723h1v3h-1zM217 672h3v1h-3zM189 722h2v1h-2zM187 714h2v2h-2zM212 692h2v1h-2zM194 707h1v1h-1zM210 697h2v1h-2zM211 682h1v3h-1zM218 688h1v3h-1zM186 718h1v2h-1zM200 716h1v2h-1zM198 728h2v2h-2zM211 698h1v1h-1zM187 717h1v3h-1zM211 704h1v1h-1zM211 679h2v2h-2zM223 679h3v1h-3zM219 704h1v1h-1zM203 717h1v1h-1zM208 688h3v1h-3zM204 716h2v3h-2zM225 681h2v3h-2zM190 721h2v1h-2zM207 693h2v1h-2zM209 709h1v1h-1zM218 696h2v1h-2zM205 696h2v1h-2zM224 681h2v1h-2zM208 692h1v2h-1zM219 674h2v3h-2zM208 696h2v2h-2zM206 709h1v1h-1zM212 693h3v2h-3zM206 686h2v1h-2zM210 695h1v2h-1zM215 692h2v2h-2zM205 702h2v2h-2zM209 677h3v2h-3zM213 686h1v2h-1zM218 700h1v2h-1zM207 688h2v1h-2zM217 687h2v1h-2zM220 675h3v3h-3zM221 694h3v3h-3zM208 694h2v2h-2zM208 691h1v1h-1zM205 687h3v3h-3zM193 723h2v2h-2zM222 698h2v2h-2zM196 715h3v2h-3zM209 689h2v2h-2zM217 697h1v2h-1zM211 685h1v1h-1zM202 725h2v3h-2zM190 715h1v3h-1zM196 723h1v2h-1zM213 691h1v2h-1zM215 691h1v1h-1zM188 717h1v2h-1zM201 703h3v3h-3zM192 708h2v1h-2zM196 717h2v3h-2zM192 716h1v1h-1zM191 718h2v3h-2zM218 685h2v1h-2zM197 719h2v1h-2zM223 677h1v1h-1zM199 725h2v1h-2zM189 712h3v2h-3zM183 717h2v1h-2zM216 699h2v1h-2zM222 678h2v1h-2zM226 675h1v1h-1zM200 704h2v2h-2zM207 704h2v2h-2zM200 704h2v3h-2zM203 706h2v2h-2zM192 709h2v2h-2zM200 702h3v2h-3zM193 721h2v3h-2zM184 716h2v3h-2zM213 680h2v1h-2zM219 678h1v2h-1zM198 711h3v3h-3zM212 687h2v2h-2zM202 700h1v3h-1zM213 693h3v1h-3zM193 704h1v3h-1zM202 702h2v1h-2zM201 707h2v2h-2zM221 676h2v2h-2zM201 727h1v1h-1zM193 723h3v2h-3zM195 723h2v3h-2zM206 693h2v2h-2zM220 673h1v2h-1zM211 674h1v3h-1zM216 681h1v2h-1zM206 680h1v3h-1zM186 718h1v2h-1zM202 716h3v2h-3zM215 689h2v2h-2zM212 685h1v2h-1zM211 684h3v1h-3zM212 683h3v3h-3zM224 683h2v2h-2zM207 676h1v2h-1zM216 682h2v1h-2zM202 716h1v1h-1zM205 677h1v2h-1zM212 681h1v1h-1zM206 678h2v1h-2zM206 701h2v1h-2zM206 685h1v1h-1zM214 683h1v1h-1zM205 688h1v1h-1zM217 702h1v1h-1zM191 717h1v2h-1zM219 699h1v1h-1zM189 719h1v1h-1zM218 700h2v3h-2zM211 683h1v2h-1zM186 714h2v3h-2zM216 679h2v1h-2zM209 697h3v2h-3zM218 686h1v1h-1zM200 718h2v2h-2zM220 691h3v2h-3zM219 696h3v2h-3zM198 722h3v1h-3zM214 697h3v1h-3zM213 673h1v2h-1zM192 724h3v2h-3zM212 679h2v2h-2zM210 698h2v2h-2zM223 678h2v2h-2zM205 680h3v2h-3zM200 716h2v1h-2zM207 696h2v1h-2zM213 694h2v2h-2zM220 701h1v3h-1zM222 681h3v1h-3zM203 708h2v2h-2zM199 729h2v1h-2zM218 690h1v2h-1zM203 704h2v1h-2zM214 689h3v2h-3zM213 696h1v2h-1zM189 714h1v2h-1zM219 692h1v1h-1zM206 711h2v1h-2zM208 685h2v2h-2zM205 678h2v1h-2zM211 679h2v3h-2zM202 704h1v1h-1zM206 685h3v1h-3zM215 684h1v1h-1zM199 728h2v1h-2zM222 674h2v3h-2zM227 675h2v3h-2zM202 712h3v2h-3zM210 677h1v2h-1zM189 709h2v2h-2zM197 723h2v2h-2zM196 725h1v1h-1zM215 694h2v1h-2zM186 715h3v2h-3zM185 718h1v3h-1zM204 709h1v1h-1zM203 706h2v1h-2zM189 710h1v2h-1zM200 718h1v1h-1zM224 683h1v1h-1zM182 716h1v1h-1zM219 681h3v2h-3zM220 701h3v3h-3zM219 675h1v3h-1zM203 711h3v1h-3zM212 683h2v1h-2zM213 676h1v1h-1zM208 691h1v1h-1zM215 673h1v2h-1zM187 718h2v1h-2zM216 687h1v1h-1zM197 717h1v2h-1zM206 677h2v2h-2zM198 703h2v1h-2zM193 726h3v1h-3zM191 716h1v2h-1zM210 708h1v2h-1zM209 710h3v1h-3zM194 717h1v1h-1zM218 677h1v2h-1zM189 711h3v2h-3zM199 710h3v3h-3zM221 679h2v2h-2zM216 693h1v3h-1zM189 717h1v1h-1zM149 724h2v2h-2zM155 729h2v1h-2zM165 747h1v2h-1zM152 730h2v1h-2zM171 739h1v2h-1zM175 745h1v2h-1zM161 754h1v1h-1zM159 756h1v2h-1zM157 756h2v1h-2zM161 745h1v3h-1zM158 737h3v3h-3zM154 725h3v1h-3zM157 726h3v2h-3zM158 755h2v1h-2zM159 756h1v2h-1zM162 731h3v3h-3zM172 729h1v2h-1zM167 745h1v1h-1zM165 745h1v2h-1zM156 735h1v1h-1zM173 734h2v2h-2zM157 728h2v1h-2zM168 733h2v2h-2zM161 756h2v3h-2zM170 746h1v2h-1zM159 729h1v3h-1zM169 735h3v2h-3zM152 729h1v1h-1zM152 723h1v1h-1zM159 748h2v2h-2zM152 726h1v1h-1zM172 730h2v2h-2zM163 731h1v1h-1zM151 726h2v2h-2zM157 723h2v3h-2zM156 751h2v1h-2zM166 739h2v1h-2zM159 744h2v3h-2zM176 732h2v3h-2zM152 722h3v1h-3zM167 733h2v3h-2zM170 736h1v2h-1zM166 737h2v2h-2zM162 737h2v3h-2zM171 733h3v1h-3zM172 747h1v1h-1zM153 723h1v3h-1zM163 729h2v2h-2zM161 753h2v3h-2zM158 748h2v2h-2zM174 735h1v1h-1zM180 738h3v2h-3zM182 743h2v1h-2zM149 729h2v1h-2zM157 732h2v2h-2zM176 744h1v1h-1zM171 734h2v1h-2zM155 732h1v3h-1zM167 737h2v2h-2zM156 733h1v1h-1zM170 732h2v2h-2zM178 744h3v1h-3zM155 731h3v2h-3zM176 742h1v1h-1zM160 757h3v1h-3zM156 726h2v1h-2zM169 730h2v1h-2zM166 737h1v1h-1zM157 726h1v3h-1zM177 736h3v1h-3zM168 735h2v2h-2zM163 747h1v1h-1zM163 743h2v2h-2zM156 723h1v3h-1zM165 736h3v2h-3zM158 739h2v3h-2zM161 734h1v2h-1zM174 732h2v1h-2zM177 740h1v2h-1zM163 736h2v1h-2zM171 747h1v2h-1zM162 732h3v1h-3zM181 740h2v1h-2zM182 743h2v2h-2zM161 753h2v3h-2zM180 744h2v1h-2zM162 743h2v1h-2zM162 733h3v1h-3zM160 751h1v2h-1zM156 722h1v1h-1zM150 722h1v1h-1zM173 743h1v2h-1zM164 735h2v2h-2zM155 726h2v1h-2zM175 740h3v1h-3zM178 742h2v2h-2zM154 722h3v3h-3zM155 734h1v3h-1zM175 739h1v2h-1zM170 732h2v1h-2zM160 748h2v3h-2zM168 740h2v1h-2zM163 731h3v2h-3zM164 747h2v1h-2zM166 747h1v1h-1zM163 741h2v2h-2zM160 745h2v1h-2zM159 742h3v1h-3zM158 739h2v2h-2zM157 730h1v1h-1zM162 743h2v1h-2zM160 733h1v2h-1zM166 730h2v2h-2zM160 737h2v2h-2zM155 727h2v1h-2zM169 736h1v3h-1zM166 745h1v1h-1zM172 747h1v2h-1zM160 741h1v3h-1zM179 742h1v1h-1zM157 728h1v2h-1zM172 734h1v1h-1zM172 736h2v3h-2zM170 744h1v2h-1zM168 733h2v2h-2zM155 726h1v3h-1zM153 731h3v3h-3zM166 737h1v1h-1zM161 749h2v3h-2zM160 748h1v1h-1zM152 723h2v1h-2zM164 746h1v2h-1zM169 738h1v1h-1zM151 722h3v1h-3zM149 728h2v1h-2zM158 745h1v1h-1zM172 736h1v1h-1zM166 738h1v1h-1zM176 738h1v1h-1zM172 741h1v1h-1zM169 747h2v1h-2zM178 744h1v2h-1zM160 754h3v3h-3zM177 740h2v3h-2zM161 741h1v3h-1zM166 739h2v2h-2zM158 749h2v2h-2zM157 754h3v3h-3zM159 735h1v2h-1zM164 733h2v2h-2zM156 729h2v2h-2zM172 730h1v2h-1zM167 745h2v1h-2zM165 747h1v2h-1zM178 732h1v1h-1zM165 749h2v1h-2zM160 744h3v1h-3zM150 728h2v2h-2zM169 734h1v3h-1zM157 743h3v2h-3zM162 750h1v2h-1zM178 732h1v1h-1zM161 734h1v1h-1zM166 734h3v1h-3zM162 752h3v3h-3zM161 730h1v2h-1zM179 732h2v1h-2zM172 730h3v1h-3zM175 744h2v2h-2zM159 745h3v3h-3zM164 729h1v1h-1zM170 742h1v2h-1zM176 730h1v1h-1zM157 723h3v2h-3zM157 730h3v1h-3zM175 737h2v3h-2zM156 755h1v2h-1zM159 742h1v2h-1zM158 751h3v3h-3zM175 731h1v2h-1zM154 726h1v2h-1zM178 734h1v1h-1zM165 740h2v3h-2zM178 737h3v1h-3zM159 747h1v3h-1zM154 731h2v3h-2zM157 729h2v1h-2zM174 735h3v2h-3zM163 743h3v2h-3zM169 740h2v2h-2zM163 753h2v1h-2zM158 738h1v1h-1zM154 731h1v1h-1zM171 744h1v2h-1zM160 742h2v1h-2zM171 731h2v2h-2zM162 727h2v2h-2zM174 730h1v3h-1zM164 752h1v1h-1zM175 730h1v3h-1zM168 735h1v3h-1zM153 731h1v2h-1zM168 742h1v1h-1zM169 732h1v3h-1zM163 742h1v1h-1zM172 731h3v2h-3zM164 732h3v2h-3zM166 733h2v1h-2zM177 731h2v2h-2zM158 750h3v1h-3zM158 746h2v2h-2zM159 750h1v2h-1zM167 736h1v2h-1zM163 734h3v2h-3zM175 738h2v3h-2zM155 726h3v3h-3zM157 752h2v2h-2zM158 735h1v2h-1zM165 736h2v1h-2zM157 742h2v2h-2zM165 733h1v1h-1zM171 732h2v1h-2zM168 732h3v2h-3zM175 737h2v2h-2zM157 745h1v1h-1zM166 732h2v2h-2zM174 739h1v2h-1zM154 722h2v1h-2zM170 735h1v3h-1zM164 728h1v1h-1zM169 742h1v2h-1zM166 740h1v2h-1zM171 739h2v3h-2zM158 754h2v1h-2zM170 742h1v2h-1zM157 751h2v3h-2zM170 738h3v1h-3zM160 753h1v1h-1zM175 743h1v1h-1zM166 734h2v1h-2zM162 740h1v2h-1zM128 753h2v1h-2zM144 754h1v1h-1zM123 752h1v3h-1zM139 750h1v1h-1zM125 743h1v1h-1zM123 753h2v3h-2zM115 753h1v2h-1zM121 751h2v2h-2zM126 743h3v2h-3zM138 749h1v2h-1zM126 745h1v1h-1zM127 743h2v2h-2zM143 756h2v1h-2zM129 753h1v3h-1zM145 748h2v2h-2zM117 751h1v2h-1zM123 749h2v2h-2zM128 756h3v2h-3zM140 746h1v2h-1zM128 747h1v1h-1zM125 747h3v2h-3zM125 742h1v2h-1zM132 748h2v2h-2zM133 744h3v3h-3zM127 744h2v2h-2zM114 749h3v1h-3zM126 741h1v1h-1zM135 746h3v2h-3zM127 742h1v2h-1zM141 747h2v2h-2zM119 754h2v2h-2zM117 752h2v3h-2zM123 746h2v3h-2zM139 750h2v1h-2zM135 747h2v2h-2zM131 744h1v2h-1zM113 755h1v3h-1zM125 753h2v2h-2zM128 755h2v2h-2zM135 745h1v2h-1zM133 755h2v3h-2zM119 756h2v2h-2zM137 750h1v2h-1zM116 753h1v1h-1zM138 747h2v2h-2zM135 756h2v2h-2zM145 752h1v2h-1zM138 754h2v2h-2zM122 744h1v2h-1zM129 746h3v1h-3zM143 754h3v1h-3zM123 742h2v3h-2zM120 744h1v1h-1zM134 744h3v2h-3zM118 749h1v1h-1zM118 746h2v1h-2zM128 753h1v2h-1zM129 748h1v3h-1zM145 752h2v1h-2zM116 756h1v1h-1zM136 745h1v2h-1zM130 745h2v2h-2zM139 745h3v1h-3zM115 752h1v3h-1zM130 748h3v2h-3zM114 756h2v3h-2zM117 757h1v1h-1zM142 751h3v2h-3zM126 756h1v2h-1zM140 753h1v2h-1zM129 748h1v3h-1zM141 749h2v2h-2zM120 748h2v3h-2zM141 749h1v3h-1zM123 742h2v1h-2zM143 748h1v2h-1zM137 743h3v3h-3zM128 741h3v1h-3zM136 753h3v3h-3zM118 752h1v2h-1zM129 753h3v1h-3zM127 747h2v1h-2zM125 747h2v2h-2zM126 748h3v1h-3zM141 756h2v2h-2zM143 756h1v1h-1zM140 755h2v2h-2zM120 754h2v1h-2zM127 744h2v3h-2zM142 756h3v1h-3zM120 746h3v2h-3zM121 756h1v3h-1zM131 743h2v3h-2zM142 749h2v3h-2zM127 752h2v2h-2zM120 750h3v1h-3zM141 752h1v2h-1zM123 755h2v1h-2zM117 756h2v3h-2zM124 752h3v2h-3zM136 747h1v2h-1zM129 750h2v2h-2zM135 752h1v3h-1zM130 754h3v2h-3zM129 749h2v2h-2zM134 746h3v2h-3zM137 756h3v2h-3zM133 746h1v2h-1zM121 751h3v3h-3zM132 755h3v1h-3zM126 750h1v1h-1zM115 751h1v1h-1zM122 755h1v3h-1zM139 747h1v3h-1zM123 742h1v2h-1zM117 747h3v2h-3zM126 754h1v3h-1zM143 755h1v3h-1zM133 755h3v2h-3zM118 746h2v1h-2zM116 752h2v2h-2zM117 753h1v2h-1zM134 756h2v2h-2zM136 749h2v3h-2zM125 745h1v2h-1zM135 751h2v1h-2zM143 749h1v1h-1zM120 753h1v2h-1zM123 750h2v1h-2zM142 752h2v1h-2zM139 749h1v2h-1zM128 754h2v2h-2zM143 748h1v3h-1zM140 750h2v3h-2zM132 746h1v2h-1zM117 747h1v1h-1zM130 745h3v2h-3zM122 753h1v2h-1zM139 748h1v1h-1zM137 757h1v2h-1zM142 746h2v2h-2zM123 744h3v1h-3zM120 747h2v2h-2zM113 756h2v3h-2zM115 750h2v3h-2zM126 756h2v1h-2zM132 744h3v2h-3zM136 746h1v1h-1zM143 749h2v3h-2zM140 748h2v2h-2zM132 754h1v1h-1zM139 754h2v1h-2zM119 752h3v1h-3zM114 755h2v1h-2zM121 744h1v2h-1zM115 752h1v1h-1zM127 757h2v2h-2zM128 743h2v2h-2zM123 754h1v3h-1zM133 748h2v1h-2zM121 754h1v1h-1zM138 748h2v2h-2zM133 747h1v2h-1zM116 750h3v1h-3zM85 750h1v1h-1zM101 754h3v2h-3zM97 754h1v1h-1zM87 748h2v2h-2zM93 750h1v2h-1zM96 749h2v1h-2zM87 750h1v1h-1zM90 748h2v2h-2zM96 750h2v1h-2zM98 747h3v2h-3zM81 747h1v3h-1zM101 752h1v2h-1zM90 752h3v3h-3zM93 750h1v1h-1zM93 751h3v1h-3zM88 747h2v1h-2zM102 752h3v1h-3zM98 752h3v1h-3zM98 753h3v3h-3zM94 746h2v2h-2zM102 750h1v2h-1zM95 750h3v3h-3zM90 743h1v2h-1zM86 745h1v1h-1zM88 749h1v1h-1zM92 750h2v1h-2zM93 749h1v1h-1zM96 751h3v3h-3zM86 749h2v1h-2zM90 747h3v1h-3zM100 751h1v2h-1zM85 749h3v1h-3zM82 749h3v1h-3zM89 752h3v2h-3zM84 751h1v2h-1zM85 749h2v1h-2zM92 752h1v2h-1zM90 744h2v2h-2zM86 751h2v1h-2zM92 748h2v2h-2zM84 747h2v2h-2zM93 746h1v2h-1zM87 746h2v2h-2zM92 753h1v1h-1zM85 746h2v2h-2zM96 749h1v2h-1zM90 748h2v3h-2zM85 744h2v3h-2zM81 747h2v1h-2zM101 748h2v2h-2zM83 748h1v1h-1zM85 748h3v1h-3zM86 750h1v1h-1zM104 755h1v2h-1zM91 744h1v1h-1zM88 745h2v1h-2zM89 751h1v3h-1zM93 748h2v2h-2zM88 742h2v1h-2zM100 752h2v1h-2zM95 744h1v1h-1zM103 749h3v1h-3zM85 747h3v3h-3zM87 752h2v3h-2zM97 747h2v3h-2zM84 749h2v3h-2zM92 750h2v1h-2zM93 749h1v2h-1zM103 755h1v2h-1zM102 751h2v3h-2zM89 752h2v3h-2zM96 748h2v3h-2zM90 745h1v1h-1zM93 748h1v1h-1zM95 750h3v1h-3zM91 753h3v1h-3zM98 755h1v2h-1zM100 749h2v2h-2zM94 754h2v3h-2zM97 751h2v3h-2zM215 702h1v1h-1zM216 700h1v2h-1zM207 710h2v1h-2zM223 678h3v1h-3zM216 700h2v1h-2zM217 702h2v1h-2zM220 676h1v2h-1zM218 704h1v2h-1zM214 695h3v2h-3zM207 685h1v3h-1zM206 698h2v2h-2zM210 673h2v1h-2zM212 686h2v3h-2zM206 705h3v1h-3zM206 696h1v1h-1zM207 691h1v2h-1zM216 703h3v1h-3zM214 709h3v1h-3zM215 690h3v2h-3zM210 694h1v2h-1zM218 709h3v2h-3zM216 702h2v2h-2zM217 702h3v2h-3zM212 689h2v3h-2zM212 700h2v2h-2zM216 695h3v2h-3zM212 691h2v1h-2zM211 708h1v1h-1zM222 673h1v2h-1zM214 686h3v2h-3zM208 714h2v3h-2zM212 675h3v1h-3zM216 678h2v2h-2zM225 683h3v2h-3zM207 708h1v3h-1zM207 676h3v1h-3zM217 678h1v1h-1zM209 693h3v2h-3zM217 684h2v3h-2zM206 713h2v3h-2zM217 687h1v1h-1zM216 679h2v1h-2zM216 687h2v3h-2zM215 696h2v1h-2zM211 711h1v1h-1zM216 687h2v3h-2zM211 697h3v1h-3zM225 679h1v2h-1zM221 688h3v1h-3zM217 690h2v1h-2zM208 701h1v3h-1zM214 697h3v3h-3zM221 697h2v2h-2zM216 709h1v1h-1zM217 703h2v2h-2zM225 687h2v2h-2zM216 702h2v2h-2zM210 672h1v2h-1zM206 681h3v2h-3zM212 711h2v3h-2zM219 674h3v1h-3zM207 694h2v3h-2zM219 677h1v1h-1zM215 682h2v3h-2zM212 698h2v2h-2zM209 683h2v3h-2zM227 678h1v1h-1zM208 685h1v3h-1zM209 712h1v3h-1zM209 679h1v1h-1zM207 686h2v1h-2zM212 685h1v2h-1zM227 681h1v2h-1zM224 676h3v2h-3zM213 691h2v3h-2zM207 693h2v3h-2zM216 676h2v3h-2zM211 695h1v1h-1zM222 693h3v3h-3zM209 692h1v2h-1zM208 687h1v1h-1zM217 678h2v2h-2zM214 692h3v3h-3zM211 708h2v2h-2zM212 689h2v2h-2zM212 690h1v1h-1zM219 688h1v2h-1zM215 694h3v2h-3zM207 680h2v1h-2zM213 703h3v1h-3zM211 691h1v3h-1zM215 675h1v2h-1zM219 687h3v2h-3zM224 682h2v2h-2zM207 691h2v3h-2zM214 690h3v3h-3zM215 682h1v1h-1zM207 680h3v1h-3zM209 701h3v1h-3zM216 680h3v2h-3zM214 691h1v2h-1zM207 673h1v2h-1zM219 701h3v1h-3zM217 696h2v3h-2zM212 693h1v2h-1zM217 709h1v1h-1zM207 711h2v1h-2zM208 681h2v2h-2zM216 683h1v2h-1zM223 684h1v2h-1zM209 686h1v1h-1zM213 677h2v2h-2zM220 688h1v2h-1zM225 683h2v1h-2zM209 714h1v3h-1zM207 709h1v3h-1zM207 714h1v1h-1zM207 708h1v1h-1zM209 712h1v2h-1zM207 700h1v2h-1zM212 708h1v3h-1zM206 694h1v3h-1zM221 674h1v1h-1zM222 676h3v1h-3zM206 699h2v1h-2zM225 675h2v3h-2zM210 692h1v2h-1zM206 709h1v2h-1zM217 673h1v1h-1zM214 677h3v2h-3zM213 674h3v1h-3zM222 675h1v3h-1zM208 712h2v3h-2zM216 705h2v1h-2zM220 704h3v2h-3zM223 677h2v1h-2zM208 707h1v2h-1zM213 680h3v1h-3zM210 671h3v2h-3zM219 672h3v3h-3zM206 687h1v3h-1zM226 681h1v3h-1zM221 683h3v2h-3zM214 707h1v1h-1zM217 704h2v1h-2zM221 678h3v1h-3zM210 677h2v1h-2zM223 676h1v1h-1zM219 701h1v3h-1zM211 695h1v2h-1zM221 690h1v1h-1zM212 708h1v2h-1zM217 695h1v2h-1zM222 688h2v1h-2zM208 690h1v1h-1zM208 689h1v3h-1zM219 680h2v1h-2zM223 674h2v2h-2zM213 708h1v2h-1zM217 708h1v2h-1zM214 692h1v2h-1zM209 710h1v2h-1zM209 681h2v2h-2zM207 701h2v1h-2zM218 705h1v1h-1zM215 677h2v1h-2zM227 678h2v1h-2zM225 674h3v1h-3zM207 712h1v3h-1zM210 672h2v2h-2zM206 674h2v2h-2zM213 700h3v2h-3zM212 702h1v1h-1zM215 682h2v3h-2zM217 674h3v1h-3zM218 693h1v3h-1zM216 692h3v1h-3zM218 684h1v1h-1zM226 674h1v2h-1zM207 679h1v2h-1zM218 702h2v3h-2zM222 687h1v2h-1zM220 687h2v2h-2zM219 691h2v1h-2zM222 688h1v2h-1zM213 672h2v1h-2zM216 681h3v2h-3zM217 704h3v1h-3zM221 694h2v2h-2zM224 680h3v1h-3zM209 696h2v2h-2zM216 679h2v1h-2zM214 698h2v2h-2zM207 696h1v2h-1zM210 677h2v2h-2zM215 691h1v2h-1zM216 702h1v2h-1zM212 712h1v1h-1zM207 698h1v1h-1zM223 684h1v2h-1zM214 684h2v2h-2zM210 702h3v2h-3zM214 689h2v2h-2zM212 712h1v2h-1zM206 706h2v2h-2zM209 695h2v3h-2zM215 683h3v2h-3zM214 685h2v3h-2zM223 679h2v2h-2zM210 692h3v2h-3zM226 677h1v2h-1zM222 674h1v1h-1zM206 672h1v2h-1zM214 690h1v2h-1zM212 712h1v2h-1zM220 677h1v3h-1zM208 707h2v1h-2zM208 694h3v2h-3zM212 671h1v2h-1zM226 678h2v1h-2zM218 701h3v2h-3zM215 711h2v3h-2zM224 676h3v1h-3zM210 678h1v1h-1zM212 684h1v2h-1zM214 699h2v3h-2zM213 684h2v1h-2zM220 679h1v3h-1zM211 698h1v1h-1zM221 679h1v3h-1zM219 692h2v3h-2zM224 683h2v3h-2zM221 693h2v2h-2zM207 710h1v2h-1zM207 700h1v1h-1zM215 676h1v3h-1zM208 679h3v1h-3zM213 692h3v2h-3zM208 693h2v3h-2zM220 704h2v1h-2zM218 674h2v2h-2zM216 675h1v2h-1zM211 693h1v2h-1zM220 679h1v2h-1zM217 697h2v1h-2zM208 671h2v2h-2zM213 682h1v2h-1zM208 690h1v2h-1zM210 673h1v2h-1zM218 685h3v2h-3zM227 683h1v1h-1zM224 675h1v2h-1zM220 683h3v2h-3zM219 690h1v2h-1zM226 683h1v3h-1zM206 679h2v1h-2zM206 687h1v2h-1zM208 701h3v1h-3zM221 686h2v1h-2zM223 691h3v2h-3zM207 686h1v2h-1zM218 694h2v1h-2zM226 674h3v1h-3zM219 694h3v1h-3zM214 709h1v2h-1zM219 705h2v2h-2zM207 673h2v2h-2zM213 672h2v2h-2zM222 692h2v3h-2zM219 702h2v1h-2zM222 682h1v3h-1zM207 688h2v2h-2zM210 690h2v1h-2zM221 686h3v2h-3zM225 689h2v3h-2zM215 676h3v1h-3zM227 680h1v2h-1zM220 681h2v3h-2zM226 675h1v1h-1zM216 699h3v1h-3zM218 686h1v3h-1zM222 682h2v3h-2zM212 681h3v1h-3zM215 687h2v2h-2zM207 670h2v1h-2zM207 673h1v1h-1zM219 671h1v3h-1zM211 688h2v3h-2zM212 685h3v1h-3zM211 702h1v1h-1zM206 674h1v1h-1zM211 707h3v1h-3zM219 704h2v2h-2zM221 695h2v1h-2zM220 703h2v3h-2zM208 699h2v2h-2zM212 677h2v3h-2zM219 683h2v2h-2zM221 696h3v1h-3zM208 692h1v1h-1zM223 687h1v3h-1zM219 698h1v2h-1zM215 675h2v1h-2zM221 692h1v2h-1zM206 707h1v2h-1zM211 703h2v2h-2zM214 689h1v2h-1zM185 716h2v3h-2zM202 701h2v3h-2zM215 694h1v2h-1zM204 699h1v2h-1zM226 674h2v1h-2zM216 704h1v2h-1zM210 692h1v3h-1zM220 693h3v2h-3zM218 676h1v1h-1zM199 707h1v1h-1zM217 692h1v2h-1zM214 705h1v1h-1zM200 718h3v1h-3zM212 702h3v1h-3zM205 695h2v2h-2zM224 678h1v2h-1zM206 682h2v3h-2zM216 686h1v3h-1zM210 683h1v3h-1zM198 707h2v3h-2zM221 679h2v2h-2zM207 699h3v1h-3zM211 696h1v2h-1zM216 695h3v1h-3zM208 698h1v3h-1zM222 684h3v1h-3zM197 712h1v3h-1zM211 690h2v2h-2zM217 682h1v3h-1zM210 689h3v1h-3zM215 670h3v1h-3zM214 683h2v2h-2zM224 689h3v1h-3zM207 689h1v1h-1zM211 678h1v3h-1zM222 677h1v1h-1zM191 709h2v1h-2zM206 707h1v1h-1zM208 685h1v1h-1zM209 685h3v1h-3zM207 700h2v2h-2zM217 675h3v3h-3zM219 698h2v1h-2zM188 717h2v3h-2zM207 709h1v3h-1zM215 679h1v3h-1zM194 708h2v3h-2zM218 707h2v3h-2zM211 700h2v2h-2zM209 688h2v2h-2zM211 674h3v2h-3zM214 702h2v1h-2zM213 693h3v2h-3zM195 709h1v2h-1zM218 687h2v2h-2zM222 683h1v3h-1zM209 693h2v1h-2zM199 717h2v2h-2zM201 718h2v3h-2zM201 710h1v1h-1zM224 679h2v2h-2zM200 715h1v3h-1zM224 683h3v3h-3zM189 718h2v2h-2zM217 695h3v3h-3zM207 712h3v3h-3zM187 717h1v3h-1zM210 692h2v3h-2zM214 682h2v2h-2zM206 702h1v1h-1zM195 716h3v2h-3zM210 708h2v2h-2zM211 698h1v3h-1zM193 715h2v2h-2zM219 681h2v2h-2zM204 699h1v1h-1zM214 693h2v2h-2zM211 709h2v2h-2zM217 690h2v2h-2zM206 681h2v2h-2zM222 687h1v1h-1zM209 691h1v2h-1zM221 677h1v1h-1zM222 696h3v2h-3zM205 710h1v2h-1zM213 678h2v1h-2zM212 685h3v2h-3zM216 705h2v2h-2zM217 680h2v1h-2zM194 708h3v2h-3zM191 717h1v1h-1zM206 676h2v2h-2zM216 687h1v2h-1zM216 705h2v2h-2zM206 676h2v3h-2zM221 689h1v1h-1zM222 698h3v2h-3zM217 691h2v2h-2zM210 705h2v2h-2zM215 693h2v1h-2zM211 675h2v1h-2zM209 687h1v3h-1zM219 677h2v2h-2zM203 701h2v3h-2zM204 701h1v1h-1zM208 705h2v2h-2zM219 675h3v1h-3zM192 708h3v1h-3zM206 709h2v2h-2zM224 685h2v2h-2zM206 702h2v2h-2zM219 673h1v2h-1zM218 674h2v2h-2zM201 707h1v2h-1zM212 693h2v3h-2zM212 684h3v2h-3zM208 675h3v1h-3zM221 689h2v1h-2zM208 676h3v2h-3zM216 686h3v2h-3zM215 695h2v1h-2zM223 674h2v1h-2zM224 680h2v3h-2zM210 674h3v2h-3zM215 705h1v1h-1zM217 675h3v1h-3zM190 719h3v3h-3zM225 675h2v3h-2zM215 692h2v1h-2zM190 717h2v2h-2zM193 718h1v1h-1zM210 702h1v2h-1zM206 707h1v1h-1zM215 709h1v1h-1zM223 695h2v2h-2zM215 701h1v2h-1zM212 695h1v1h-1zM210 673h1v2h-1zM205 702h1v2h-1zM208 681h1v3h-1zM200 705h3v2h-3zM190 717h1v3h-1zM216 674h1v2h-1zM216 697h2v1h-2zM203 717h3v3h-3zM190 712h1v1h-1zM219 677h2v3h-2zM206 697h3v2h-3zM210 671h1v2h-1zM216 702h1v1h-1zM209 692h2v3h-2zM201 715h1v3h-1zM209 707h1v2h-1zM217 695h3v3h-3zM211 698h1v3h-1zM214 709h2v1h-2zM222 682h2v1h-2zM216 673h2v2h-2zM184 717h1v2h-1zM222 691h1v2h-1zM195 711h1v2h-1zM189 712h3v3h-3zM215 687h2v1h-2zM200 705h2v1h-2zM187 715h1v3h-1zM211 671h1v2h-1zM203 710h3v1h-3zM199 711h2v1h-2zM211 683h1v2h-1zM208 700h3v1h-3zM194 711h1v2h-1zM213 681h3v2h-3zM217 677h1v1h-1zM209 697h1v2h-1zM208 712h2v2h-2zM209 680h1v2h-1zM221 689h2v1h-2zM206 687h1v2h-1zM206 683h2v2h-2zM201 711h1v3h-1zM203 713h3v3h-3zM206 716h2v2h-2zM207 711h2v3h-2zM212 676h3v2h-3zM208 697h1v2h-1zM217 688h2v1h-2zM214 701h1v1h-1zM209 702h1v2h-1zM214 706h1v1h-1zM223 682h1v2h-1zM210 683h1v2h-1zM212 699h1v1h-1zM206 706h1v3h-1zM206 706h1v1h-1zM196 715h1v2h-1zM207 712h1v2h-1zM213 692h2v2h-2zM199 710h2v1h-2zM213 683h1v3h-1zM208 706h3v1h-3zM217 674h1v1h-1zM212 671h2v2h-2zM188 716h3v2h-3zM217 682h3v1h-3zM224 680h1v3h-1zM212 682h2v2h-2zM210 685h2v3h-2zM214 695h3v2h-3zM214 689h2v2h-2zM202 719h2v1h-2zM207 701h1v1h-1zM201 711h3v2h-3zM202 705h2v2h-2zM210 706h2v2h-2zM213 698h1v2h-1zM194 711h3v1h-3zM194 717h1v1h-1zM202 716h2v1h-2zM200 707h2v3h-2zM212 704h3v2h-3zM196 709h1v2h-1zM218 679h2v3h-2zM213 684h2v2h-2zM208 697h3v1h-3zM207 681h2v2h-2zM216 679h1v3h-1zM219 673h1v2h-1zM221 693h3v2h-3zM191 719h1v1h-1zM220 685h1v1h-1zM220 677h2v1h-2zM210 694h2v3h-2zM207 713h1v2h-1zM187 713h2v1h-2zM206 675h1v2h-1zM208 706h2v1h-2zM222 677h1v1h-1zM191 711h1v3h-1zM216 684h1v2h-1zM216 706h3v3h-3zM201 717h1v2h-1zM220 689h3v1h-3zM208 697h2v1h-2zM212 672h2v1h-2zM214 670h2v2h-2zM193 712h2v2h-2zM221 698h2v1h-2zM188 718h3v2h-3zM209 706h3v3h-3zM206 708h3v1h-3zM209 711h1v2h-1zM197 716h2v2h-2zM212 690h3v1h-3zM218 683h2v1h-2zM203 718h2v1h-2zM216 690h2v2h-2zM209 699h2v2h-2zM193 714h3v1h-3zM207 716h2v1h-2zM225 678h2v1h-2zM208 696h1v1h-1zM207 680h2v3h-2zM209 710h1v3h-1zM206 678h2v2h-2zM214 694h2v1h-2zM214 709h1v1h-1zM211 676h2v1h-2zM217 687h1v3h-1zM216 703h3v1h-3zM213 686h1v3h-1zM207 712h2v2h-2zM213 689h2v3h-2zM206 686h2v1h-2zM213 683h1v3h-1zM207 713h3v1h-3zM210 696h2v2h-2zM190 709h2v1h-2zM206 676h1v1h-1zM211 671h1v1h-1zM216 681h3v2h-3zM211 706h2v1h-2zM206 681h2v1h-2zM217 671h2v1h-2zM212 684h2v2h-2zM193 715h1v2h-1zM206 692h3v2h-3zM210 701h1v2h-1zM210 696h2v1h-2zM195 719h1v1h-1zM214 696h1v2h-1zM219 671h3v1h-3zM205 716h1v2h-1zM198 711h3v1h-3zM197 712h1v1h-1zM214 680h1v1h-1zM190 718h3v1h-3zM214 697h1v1h-1zM222 693h2v2h-2zM194 711h1v1h-1zM219 704h2v3h-2zM197 719h1v1h-1zM215 696h2v3h-2zM221 685h1v2h-1zM205 709h3v2h-3zM197 715h3v3h-3zM207 695h2v1h-2zM195 718h2v2h-2zM215 678h1v2h-1zM211 699h2v1h-2zM191 711h1v2h-1zM221 688h2v2h-2zM220 679h3v3h-3zM203 718h1v1h-1zM207 715h2v2h-2zM221 675h3v2h-3zM217 691h2v1h-2zM205 712h2v2h-2zM222 698h2v1h-2zM215 678h1v1h-1zM198 706h2v2h-2zM224 677h1v1h-1zM194 708h3v3h-3zM209 686h3v3h-3zM200 720h3v1h-3zM217 686h2v3h-2zM192 709h2v2h-2zM210 687h2v2h-2zM211 681h1v1h-1zM217 703h3v1h-3zM214 684h1v1h-1zM209 700h2v1h-2zM209 702h1v1h-1zM206 692h3v2h-3zM212 702h2v2h-2zM199 718h3v1h-3zM212 673h1v3h-1zM218 692h3v3h-3zM216 674h1v3h-1zM218 700h1v1h-1zM217 686h2v3h-2zM193 715h3v1h-3zM200 708h2v3h-2zM212 675h1v3h-1zM216 677h1v1h-1zM209 704h1v1h-1zM214 672h1v3h-1zM203 704h3v1h-3zM216 692h2v2h-2zM217 682h2v3h-2zM183 717h1v1h-1zM209 684h1v1h-1zM221 699h3v2h-3zM219 681h1v1h-1zM190 718h2v3h-2zM218 698h2v3h-2zM209 691h1v2h-1zM211 705h2v2h-2zM201 712h1v1h-1zM206 690h2v1h-2zM220 693h2v2h-2zM212 675h1v2h-1zM206 692h1v3h-1zM218 694h1v2h-1zM212 685h3v1h-3zM213 704h2v2h-2zM219 703h1v3h-1zM203 698h3v1h-3zM209 713h3v1h-3zM217 675h2v1h-2zM200 707h1v2h-1zM218 693h1v3h-1zM211 695h2v1h-2zM209 709h2v2h-2zM208 675h1v2h-1zM198 718h2v1h-2zM213 689h2v3h-2zM212 705h2v1h-2zM221 693h3v1h-3zM215 688h1v3h-1zM205 711h1v2h-1zM201 718h1v1h-1zM190 718h2v2h-2zM205 714h1v3h-1zM208 702h1v2h-1zM214 706h1v1h-1zM214 673h1v2h-1zM215 699h1v2h-1zM799 634h1v1h-1zM790 605h2v2h-2zM796 644h2v1h-2zM800 634h2v3h-2zM796 612h1v2h-1zM795 629h1v2h-1zM796 631h2v2h-2zM788 647h1v2h-1zM801 612h2v3h-2zM800 627h2v2h-2zM791 613h2v3h-2zM792 608h1v3h-1zM799 612h2v1h-2zM791 626h1v2h-1zM792 606h1v2h-1zM792 648h3v1h-3zM794 634h1v1h-1zM800 653h2v1h-2zM791 633h1v2h-1zM796 644h3v2h-3zM798 627h3v2h-3zM796 629h2v2h-2zM800 654h1v2h-1zM797 638h2v1h-2zM800 634h2v3h-2zM793 644h2v1h-2zM802 653h1v2h-1zM795 640h1v2h-1zM801 633h3v2h-3zM792 614h2v1h-2zM801 652h2v2h-2zM791 648h1v1h-1zM796 635h2v2h-2zM801 646h1v3h-1zM795 649h3v2h-3zM793 652h2v2h-2zM800 614h2v1h-2zM791 642h3v1h-3zM799 610h2v2h-2zM796 611h1v3h-1zM802 650h1v1h-1zM793 604h2v1h-2zM796 652h2v1h-2zM792 631h1v1h-1zM795 611h2v1h-2zM789 646h1v1h-1zM802 637h2v1h-2zM801 636h3v1h-3zM798 610h2v3h-2zM793 613h3v2h-3zM799 630h3v2h-3zM802 650h3v1h-3zM799 618h1v2h-1zM797 643h2v2h-2zM800 647h1v1h-1zM795 624h3v1h-3zM791 649h2v2h-2zM796 643h1v1h-1zM792 649h1v2h-1zM796 615h2v2h-2zM795 617h3v2h-3zM799 616h2v1h-2zM801 622h2v2h-2zM795 641h1v3h-1zM798 636h2v1h-2zM796 634h1v1h-1zM791 624h3v2h-3zM791 613h2v2h-2zM801 620h2v1h-2zM794 646h1v3h-1zM794 603h2v1h-2zM793 651h1v1h-1zM792 608h2v2h-2zM798 619h3v3h-3zM789 645h1v1h-1zM796 614h1v2h-1zM794 628h1v2h-1zM798 610h2v2h-2zM798 607h1v1h-1zM793 610h3v3h-3zM794 609h3v3h-3zM799 623h3v1h-3zM789 648h1v2h-1zM797 608h3v3h-3zM792 610h2v2h-2zM788 647h3v3h-3zM790 648h1v3h-1zM803 651h2v3h-2zM801 631h1v1h-1zM794 642h2v1h-2zM791 614h2v2h-2zM797 643h1v2h-1zM793 653h2v2h-2zM800 627h2v1h-2zM797 655h2v1h-2zM794 646h1v3h-1zM794 640h3v2h-3zM791 612h1v1h-1zM800 639h1v1h-1zM800 632h1v3h-1zM802 648h1v1h-1zM797 618h1v1h-1zM799 643h1v2h-1zM799 648h3v3h-3zM800 629h2v3h-2zM799 639h2v3h-2zM791 629h1v1h-1zM793 607h2v2h-2zM792 629h2v1h-2zM801 642h3v2h-3zM796 648h1v1h-1zM794 607h1v2h-1zM797 652h2v1h-2zM794 650h2v1h-2zM794 625h2v2h-2zM793 639h1v3h-1zM796 630h2v1h-2zM802 639h2v3h-2zM797 612h2v1h-2zM793 635h1v3h-1zM801 621h1v2h-1zM801 615h2v1h-2zM791 633h1v2h-1zM799 653h1v1h-1zM794 619h1v1h-1zM794 644h1v1h-1zM798 624h1v1h-1zM799 629h3v1h-3zM794 630h2v2h-2zM794 609h2v3h-2zM798 623h1v1h-1zM794 620h2v1h-2zM790 645h2v1h-2zM799 604h2v2h-2zM796 631h1v3h-1zM792 617h2v2h-2zM796 616h2v2h-2zM800 650h2v2h-2zM800 651h1v2h-1zM792 626h2v2h-2zM800 628h2v3h-2zM801 653h1v3h-1zM800 632h2v2h-2zM793 627h2v3h-2zM789 647h3v3h-3zM793 618h3v2h-3zM795 578h1v2h-1zM797 575h2v1h-2zM792 582h1v3h-1zM793 565h1v1h-1zM794 573h2v2h-2zM792 602h3v2h-3zM799 561h3v2h-3zM793 591h1v2h-1zM791 598h2v2h-2zM796 568h2v1h-2zM795 590h1v2h-1zM799 569h2v2h-2zM798 588h2v1h-2zM798 569h1v3h-1zM791 598h2v1h-2zM792 564h2v1h-2zM794 568h2v1h-2zM793 564h2v3h-2zM794 602h1v1h-1zM793 573h2v1h-2zM794 570h2v3h-2zM798 561h3v3h-3zM793 576h2v2h-2zM796 588h1v1h-1zM798 587h2v3h-2zM797 570h1v1h-1zM798 573h2v2h-2zM795 592h2v2h-2zM795 574h1v2h-1zM797 562h3v2h-3zM799 593h1v1h-1zM796 577h1v1h-1zM798 573h3v2h-3zM798 601h1v1h-1zM800 572h1v2h-1zM795 584h1v1h-1zM799 583h1v3h-1zM794 572h1v1h-1zM794 570h2v1h-2zM793 561h2v2h-2zM796 578h3v1h-3zM799 594h1v1h-1zM797 597h1v2h-1zM791 600h2v2h-2zM793 570h2v3h-2zM796 578h1v2h-1zM797 566h1v2h-1zM794 565h1v1h-1zM794 598h2v3h-2zM795 561h1v1h-1zM792 579h1v2h-1zM798 596h3v2h-3zM797 574h3v1h-3zM798 566h2v2h-2zM800 592h3v2h-3zM796 595h1v2h-1zM792 576h3v2h-3zM796 568h2v1h-2zM795 586h2v1h-2zM793 576h1v2h-1zM798 561h1v1h-1zM797 564h1v3h-1zM797 595h2v1h-2zM798 592h2v3h-2zM796 592h1v1h-1zM795 576h3v1h-3zM794 592h2v2h-2zM793 601h3v3h-3zM792 562h1v1h-1zM793 563h1v1h-1zM798 587h1v2h-1zM796 571h1v3h-1zM796 579h2v1h-2zM796 568h3v1h-3zM795 570h1v1h-1zM800 567h3v1h-3z" fill="#000"/>
<path d="M193 705h2v2h-2zM205 708h1v2h-1zM220 680h1v1h-1zM205 686h2v2h-2zM219 682h1v2h-1zM212 710h2v2h-2zM211 695h2v1h-2zM188 714h1v1h-1zM217 685h2v2h-2zM222 675h2v2h-2zM223 694h2v2h-2zM201 711h2v1h-2zM211 694h2v1h-2zM219 682h2v2h-2zM224 681h1v1h-1zM195 727h1v1h-1zM221 697h1v2h-1zM198 720h2v1h-2zM225 685h1v1h-1zM200 724h1v2h-1zM193 715h1v1h-1zM201 709h2v1h-2zM195 707h2v1h-2zM203 717h1v2h-1zM220 691h2v1h-2zM201 706h1v2h-1zM189 721h1v2h-1zM223 679h2v1h-2zM206 682h2v1h-2zM222 687h1v2h-1zM213 699h2v1h-2zM223 673h2v2h-2zM223 676h2v2h-2zM194 715h2v2h-2zM211 709h1v2h-1zM200 705h2v1h-2zM189 710h2v2h-2zM189 717h2v2h-2zM215 684h2v2h-2zM187 713h2v2h-2zM214 686h2v2h-2zM213 705h1v1h-1zM193 702h2v1h-2zM185 716h1v2h-1zM227 683h1v1h-1zM192 705h1v2h-1zM211 693h2v1h-2zM195 717h2v2h-2zM200 727h1v1h-1zM218 700h2v1h-2zM222 673h2v2h-2zM209 689h2v2h-2zM201 719h2v2h-2zM220 683h2v2h-2zM221 679h2v1h-2zM209 698h2v1h-2zM196 724h2v1h-2zM204 712h1v1h-1zM198 713h2v2h-2zM198 726h2v2h-2zM221 685h1v2h-1zM187 713h2v2h-2zM210 701h2v1h-2zM217 683h2v1h-2zM198 710h1v2h-1zM200 728h1v1h-1zM191 717h1v1h-1zM157 748h2v2h-2zM156 723h2v2h-2zM164 747h2v1h-2zM163 745h1v2h-1zM158 741h1v1h-1zM157 744h2v2h-2zM172 746h1v2h-1zM154 722h2v2h-2zM170 735h2v1h-2zM173 745h1v2h-1zM152 723h1v1h-1zM174 732h2v2h-2zM178 742h2v2h-2zM151 722h2v1h-2zM175 740h1v2h-1zM156 736h1v1h-1zM171 741h2v2h-2zM154 734h1v2h-1zM152 731h2v1h-2zM158 726h1v2h-1zM157 737h2v1h-2zM168 735h1v1h-1zM172 733h1v2h-1zM164 745h1v1h-1zM166 750h2v1h-2zM151 725h2v2h-2zM155 726h2v1h-2zM153 728h2v2h-2zM158 748h2v2h-2zM178 738h2v1h-2zM173 730h1v1h-1zM173 745h2v1h-2zM172 737h2v1h-2zM164 745h2v1h-2zM156 728h2v2h-2zM158 727h1v2h-1zM173 743h2v2h-2zM165 736h1v2h-1zM169 746h1v1h-1zM180 739h2v2h-2zM168 739h1v2h-1zM172 740h2v1h-2zM150 729h2v2h-2zM123 752h2v1h-2zM127 749h2v1h-2zM133 743h2v2h-2zM126 757h1v2h-1zM120 749h2v2h-2zM140 745h1v2h-1zM129 747h1v2h-1zM130 742h2v2h-2zM124 750h1v1h-1zM115 757h1v2h-1zM132 747h1v2h-1zM130 752h2v2h-2zM125 749h1v2h-1zM117 752h2v1h-2zM120 751h1v2h-1zM141 747h1v2h-1zM123 751h2v1h-2zM124 746h2v1h-2zM101 748h1v2h-1zM87 749h2v2h-2zM93 750h1v2h-1zM89 743h2v2h-2zM90 751h1v2h-1zM87 742h2v2h-2zM83 750h2v1h-2zM93 745h2v2h-2zM93 746h2v1h-2zM88 743h2v1h-2zM208 676h2v2h-2zM208 690h1v2h-1zM217 693h1v2h-1zM221 694h2v1h-2zM213 685h2v1h-2zM219 699h2v1h-2zM208 672h2v1h-2zM225 680h2v2h-2zM221 695h2v2h-2zM220 693h1v2h-1zM216 709h1v1h-1zM210 685h2v2h-2zM217 700h1v2h-1zM213 703h2v2h-2zM217 696h2v1h-2zM211 674h1v2h-1zM221 678h2v2h-2zM206 680h2v1h-2zM211 691h1v2h-1zM209 698h2v2h-2zM215 685h2v2h-2zM207 714h2v2h-2zM212 703h1v1h-1zM210 677h2v2h-2zM206 692h2v2h-2zM224 678h1v2h-1zM223 685h1v2h-1zM221 680h2v1h-2zM221 684h1v2h-1zM218 673h1v2h-1zM223 676h2v1h-2zM218 679h2v1h-2zM222 682h2v1h-2zM222 688h1v1h-1zM213 697h1v2h-1zM206 696h1v1h-1zM209 688h1v1h-1zM217 685h2v2h-2zM213 711h2v2h-2zM212 703h1v2h-1zM208 697h1v2h-1zM214 704h1v1h-1zM222 682h1v2h-1zM222 689h1v2h-1zM213 672h1v1h-1zM209 684h2v2h-2zM216 707h1v1h-1zM195 717h2v2h-2zM208 687h2v1h-2zM208 702h1v1h-1zM206 686h2v1h-2zM204 702h2v1h-2zM197 710h2v1h-2zM200 706h1v2h-1zM226 680h2v2h-2zM214 693h2v2h-2zM201 715h2v2h-2zM208 710h1v1h-1zM221 684h1v1h-1zM218 683h1v2h-1zM208 684h1v2h-1zM225 674h1v1h-1zM210 697h1v2h-1zM207 683h2v2h-2zM203 709h2v1h-2zM225 677h2v2h-2zM217 675h2v2h-2zM212 682h1v2h-1zM217 708h1v2h-1zM213 696h2v1h-2zM216 689h2v1h-2zM222 693h1v2h-1zM207 704h2v2h-2zM215 697h2v2h-2zM185 717h2v1h-2zM211 677h1v2h-1zM213 703h2v1h-2zM193 711h1v1h-1zM203 702h2v2h-2zM206 679h2v1h-2zM211 692h2v2h-2zM208 696h1v2h-1zM224 678h2v2h-2zM217 682h2v2h-2zM216 672h2v2h-2zM210 675h1v1h-1zM219 699h2v1h-2zM206 690h2v2h-2zM208 674h1v1h-1zM213 672h2v1h-2zM191 716h2v1h-2zM220 682h1v1h-1zM220 692h1v2h-1zM213 690h2v2h-2zM196 721h1v2h-1zM225 682h1v1h-1zM221 701h2v1h-2zM192 714h2v1h-2zM214 670h1v1h-1zM192 713h2v2h-2zM212 688h2v2h-2zM215 700h2v2h-2zM193 715h1v1h-1zM215 671h2v2h-2zM193 717h1v2h-1zM207 691h2v2h-2zM215 696h2v2h-2zM218 699h1v1h-1zM192 708h1v1h-1zM222 683h2v2h-2zM202 711h1v2h-1zM201 713h2v1h-2zM224 680h1v1h-1zM208 692h2v1h-2zM196 713h1v1h-1zM194 716h1v2h-1zM218 705h2v2h-2zM211 680h1v2h-1zM211 683h1v1h-1zM795 649h1v1h-1zM795 639h1v1h-1zM796 638h1v2h-1zM799 619h1v1h-1zM792 606h1v2h-1zM797 623h1v1h-1zM798 616h1v1h-1zM792 630h2v1h-2zM797 649h2v2h-2zM792 639h2v2h-2zM796 604h1v1h-1zM801 636h2v2h-2zM793 630h2v1h-2zM801 653h1v1h-1zM792 653h1v2h-1zM797 624h2v1h-2zM791 646h1v1h-1zM800 630h1v2h-1zM799 623h2v2h-2zM796 614h2v1h-2zM796 646h2v2h-2zM793 647h2v1h-2zM793 617h2v2h-2zM793 624h2v2h-2zM796 632h1v1h-1zM798 603h2v2h-2zM797 590h1v2h-1zM798 582h2v2h-2zM795 580h2v2h-2zM794 586h1v2h-1zM797 587h2v1h-2zM793 602h1v2h-1zM791 598h1v1h-1zM797 569h2v2h-2zM793 588h2v1h-2zM793 561h2v1h-2zM794 593h2v2h-2zM797 571h2v1h-2zM794 582h2v1h-2z" fill="#004164"/>
<path d="M212 674h2v2h-2zM209 699h1v2h-1zM216 676h2v1h-2zM205 699h2v1h-2zM212 709h1v1h-1zM219 704h2v2h-2zM216 673h2v2h-2zM210 683h2v2h-2zM206 710h1v2h-1zM206 712h1v2h-1zM194 704h2v2h-2zM221 697h1v2h-1zM206 695h2v1h-2zM190 722h2v1h-2zM196 725h1v1h-1zM189 721h2v1h-2zM208 676h2v2h-2zM210 685h2v1h-2zM203 712h2v1h-2zM203 710h2v1h-2zM194 724h2v1h-2zM211 711h2v2h-2zM206 709h2v2h-2zM225 686h2v2h-2zM215 693h1v2h-1zM221 679h2v1h-2zM203 699h2v2h-2zM209 710h1v1h-1zM208 710h2v1h-2zM203 700h2v2h-2zM217 684h2v2h-2zM200 713h1v2h-1zM154 729h1v2h-1zM158 734h2v2h-2zM161 745h1v1h-1zM161 746h2v1h-2zM164 736h2v1h-2zM179 736h2v2h-2zM176 730h2v2h-2zM175 736h1v2h-1zM174 737h2v1h-2zM168 737h2v1h-2zM166 729h2v1h-2zM171 736h2v2h-2zM157 734h1v2h-1zM128 746h2v1h-2zM138 749h1v2h-1zM140 752h2v1h-2zM133 755h2v2h-2zM142 747h2v1h-2zM130 755h2v2h-2zM140 755h2v2h-2zM138 755h2v1h-2zM127 750h1v1h-1zM86 743h2v2h-2zM81 747h1v2h-1zM89 745h1v2h-1zM86 749h2v1h-2zM216 709h2v1h-2zM211 701h1v2h-1zM210 702h2v2h-2zM207 713h1v1h-1zM220 694h1v1h-1zM223 684h2v2h-2zM208 701h2v2h-2zM213 688h2v1h-2zM213 693h2v1h-2zM208 675h2v1h-2zM217 685h1v1h-1zM223 689h2v1h-2zM216 684h2v2h-2zM208 708h2v1h-2zM213 691h1v2h-1zM193 713h2v2h-2zM206 707h1v2h-1zM224 689h1v2h-1zM202 715h2v2h-2zM218 686h1v1h-1zM221 677h2v1h-2zM208 674h2v2h-2zM186 716h2v1h-2zM212 701h1v2h-1zM214 675h1v2h-1zM203 701h2v2h-2zM215 688h1v2h-1zM222 674h2v1h-2zM206 712h2v2h-2zM219 680h2v1h-2zM801 650h1v2h-1zM794 645h2v2h-2zM796 630h2v2h-2zM798 609h2v2h-2zM798 640h1v1h-1zM792 626h2v2h-2zM793 601h2v1h-2zM795 562h2v1h-2z" fill="#5c4f49"/>
<path d="M181.3,6.0 189.5,13.4 195.1,23.2 198.6,33.1 200.5,42.9 200.5,67.6 200.5,92.2 198.1,98.3 193.1,104.5 188.7,110.7 187.7,119.3 187.0,126.7 184.5,131.6 183.3,139.0 178.4,146.4 175.9,153.7 168.5,166.1 162.4,175.9 156.2,187.0 150.1,198.1 145.1,206.0 M241.2,6.0 235.0,12.2 230.1,18.3 228.4,25.7 228.4,42.9 227.6,52.8 222.7,58.9 215.3,65.1 207.9,68.8 200.5,71.3 M241.2,6.0 246.1,12.2 248.6,19.5 254.7,25.7 259.6,33.1 263.3,42.9 264.1,51.6 268.3,57.7 274.4,59.7 286.0,59.7 M204.2,206.0 215.3,195.6 222.7,189.5 235.0,183.3 247.3,178.4 259.6,173.4 271.9,170.5 286.0,167.3 M285.9,59.7 298.0,55.2 305.4,53.3 311.6,54.8 317.7,58.9 325.1,63.9 334.9,71.3 347.3,79.9 359.6,88.5 369.4,99.6 376.8,105.7 384.2,110.7 394.0,117.3 400.2,124.2 405.1,134.0 M474.1,6.0 472.4,18.3 469.2,33.1 463.0,45.4 453.1,52.8 440.8,57.7 433.4,61.4 429.8,70.0 427.3,79.9 422.4,91.0 416.2,102.0 411.3,109.4 408.8,115.6 410.1,124.2 407.6,134.0 M365.7,134.0 368.2,121.7 375.6,110.7 384.2,103.3 394.0,99.6 403.9,99.6 416.2,102.0 428.5,105.7 435.9,111.9 437.1,124.2 435.9,136.5 432.2,148.8 427.3,158.7 416.2,163.6 403.9,164.8 391.6,163.6 380.5,159.9 371.9,152.5 367.0,143.9 365.7,134.0 M266.0,173.4 280.8,168.5 298.0,163.6 315.2,159.9 332.5,157.4 347.3,151.3 359.6,146.4 371.9,143.9 384.2,140.2 394.0,136.5 403.9,134.0 M403.9,134.0 418.7,132.8 438.4,132.1 453.1,132.8 467.9,134.0 482.7,137.7 502.4,136.5 517.2,136.5 527.0,142.7 536.9,147.6 546.0,152.5 M403.9,136.5 402.7,148.8 400.9,163.6 397.7,178.4 396.5,193.1 397.7,206.0 M407.6,136.5 416.2,146.4 426.1,156.2 435.9,167.3 443.3,178.4 448.2,188.2 460.5,198.1 466.7,206.0 M588.8,6.0 587.6,15.8 588.8,25.7 592.5,33.1 598.6,40.5 604.3,46.6 604.8,55.2 603.6,65.1 599.9,73.7 599.4,82.3 603.6,91.0 604.8,97.6 601.1,103.3 594.9,107.0 590.5,110.7 593.7,116.8 596.2,124.2 599.9,129.1 604.8,134.0 609.7,140.2 612.2,146.9 615.9,148.8 M526.0,143.9 535.8,150.1 550.6,158.2 565.4,157.4 580.2,160.6 592.5,160.6 602.3,157.4 612.2,153.7 619.6,148.8 M619.6,147.6 629.4,148.8 641.7,150.1 651.6,147.6 659.0,142.7 668.8,134.0 683.6,127.9 698.4,120.5 713.1,111.9 727.9,104.5 742.7,95.9 757.5,88.5 772.2,82.3 784.6,77.4 796.9,74.5 806.0,71.3 M592.5,160.6 585.1,168.5 577.7,178.4 570.3,188.2 562.9,198.1 555.5,206.0 M659.0,142.7 666.4,150.1 672.5,153.7 673.3,163.6 678.7,168.5 684.8,173.4 686.1,182.1 691.0,187.7 700.8,190.2 715.6,188.7 730.4,185.8 742.7,182.8 757.5,180.3 768.6,175.9 782.1,173.9 796.9,173.0 806.0,174.7 M715.6,188.7 720.5,196.8 726.7,206.0 M6.0,257.2 20.8,256.5 38.0,255.2 55.2,251.6 72.5,246.6 89.7,241.7 104.5,236.8 114.3,233.1 129.1,228.2 143.9,225.2 158.7,223.7 166.1,223.2 M145.1,206.0 148.8,213.4 152.5,220.8 157.4,224.5 M160.6,224.5 163.6,222.0 171.0,221.3 175.4,223.7 175.9,228.2 173.4,231.1 166.1,232.1 161.1,231.1 160.6,224.5 M175.4,223.7 183.3,219.5 193.1,214.6 203.0,209.7 210.4,204.8 M163.6,230.6 165.6,238.0 167.3,247.9 168.5,257.7 169.8,270.0 173.0,279.9 173.4,289.7 172.2,299.6 171.5,309.4 173.4,319.3 175.9,329.1 177.1,339.0 178.4,348.8 181.3,358.7 182.8,368.5 183.3,378.4 181.3,390.7 178.4,400.5 175.9,406.0 M397.7,206.0 399.0,218.3 398.5,230.6 397.7,238.0 394.0,250.3 393.6,262.6 395.3,274.9 396.5,287.3 396.0,299.6 397.7,311.9 400.2,324.2 400.9,336.5 401.4,348.8 402.7,358.7 403.9,366.1 406.4,373.4 405.9,378.4 M466.7,206.0 471.6,213.4 477.8,220.8 482.7,228.2 487.6,233.1 497.5,236.8 503.6,239.2 M546.0,221.3 536.9,226.9 527.0,233.1 522.1,237.5 512.2,236.0 503.6,239.2 M503.6,239.2 499.9,247.9 497.5,258.9 492.5,270.0 485.2,282.3 477.8,294.6 470.4,307.0 463.0,318.0 458.1,326.7 450.7,334.0 443.3,341.4 435.9,347.6 428.5,352.5 421.1,358.7 416.2,364.8 411.3,371.0 406.4,375.9 M522.1,238.0 527.0,245.4 533.2,250.8 536.9,260.2 538.1,268.8 541.3,277.4 546.0,286.0 M406.4,375.9 413.7,368.5 423.6,363.6 438.4,362.4 453.1,363.1 467.9,363.6 482.7,362.4 497.5,359.9 512.2,356.2 527.0,353.7 536.9,352.5 546.0,351.3 M406.4,378.4 399.0,385.8 389.1,391.9 379.3,396.8 369.4,399.3 359.6,400.5 349.7,401.8 339.9,406.0 M405.9,378.4 404.4,388.2 406.4,398.1 407.6,406.0 M526.0,244.2 534.6,249.1 537.1,260.2 539.5,270.0 543.2,279.9 544.5,289.7 549.4,299.6 555.5,307.0 558.0,314.3 565.4,321.7 571.6,329.1 576.5,335.3 581.4,343.9 582.6,351.3 M583.9,293.4 578.9,302.0 574.0,311.9 571.6,321.7 571.6,329.1 M556.8,206.0 553.1,212.2 545.7,218.3 538.3,224.5 530.9,229.4 526.0,233.1 M583.9,346.4 592.5,336.5 602.3,329.1 612.2,323.0 624.5,318.0 636.8,311.9 649.1,304.5 659.0,298.3 668.8,292.2 678.7,286.0 688.5,281.1 698.4,277.4 710.7,273.7 720.5,267.6 725.5,260.2 730.4,256.5 740.2,252.8 750.1,246.6 759.9,241.7 772.2,235.5 784.6,230.6 796.9,225.7 806.0,223.2 M526.0,355.5 538.3,353.7 550.6,351.3 562.9,347.6 575.2,347.6 582.6,351.3 M582.6,351.3 594.9,352.5 607.3,353.7 619.6,357.4 629.4,361.1 641.7,363.6 654.0,366.1 668.8,367.3 683.6,368.0 698.4,369.8 713.1,371.5 727.9,372.2 742.7,373.4 752.5,373.0 762.4,368.5 772.2,362.4 782.1,356.2 791.9,350.1 799.3,345.1 806.0,340.9 M581.4,356.2 575.2,363.6 567.9,371.0 560.5,378.4 555.5,388.2 550.6,398.1 548.2,406.0 M585.1,358.7 591.3,368.5 596.2,378.4 599.9,388.2 604.8,398.1 609.7,406.0 M726.7,206.0 732.8,214.6 742.7,215.8 747.6,220.8 755.0,229.4 758.7,240.5 762.4,250.3 766.1,262.6 769.8,274.9 772.2,279.9 M739.0,255.2 742.7,262.6 752.5,270.0 762.4,276.2 772.2,281.1 782.1,289.7 789.5,297.1 796.9,303.3 806.0,308.2 M575.2,347.6 576.5,340.2 581.4,335.3 588.8,334.0 593.0,336.5 593.7,346.4 593.0,356.2 590.0,361.6 583.9,363.6 578.2,361.1 575.2,356.2 575.2,347.6 M576.5,335.3 581.4,343.9 583.1,353.7 582.1,363.6 M6.0,460.7 18.3,462.1 35.5,464.6 55.2,467.1 70.0,470.5 82.3,474.9 92.2,476.9 99.6,474.9 109.4,473.7 121.7,473.0 134.0,473.0 143.9,476.2 151.3,479.9 163.6,479.4 178.4,478.6 193.1,476.9 207.9,476.2 222.7,475.7 237.5,474.9 252.2,474.5 262.1,473.0 271.9,469.5 279.3,467.1 286.0,465.1 M175.9,406.0 171.0,413.4 166.1,423.2 162.4,433.1 161.6,442.9 160.6,452.8 156.2,462.6 153.3,471.3 151.3,479.9 147.6,487.3 143.9,494.6 139.0,502.0 136.0,509.4 134.0,519.3 132.1,529.1 131.1,539.0 130.4,548.8 129.9,558.7 129.1,568.5 128.6,578.4 127.9,588.2 126.7,598.1 126.2,606.0 M147.6,471.3 153.7,468.8 155.0,472.5 147.6,478.6 M262.1,473.0 257.2,476.2 252.2,484.8 248.6,494.6 243.6,504.5 237.5,514.3 236.2,524.2 231.3,531.6 227.6,536.5 222.7,542.7 217.8,548.8 215.3,556.2 214.8,566.1 215.3,573.4 214.1,578.4 210.4,588.2 206.7,598.1 203.0,606.0 M341.1,406.0 334.9,413.4 325.1,423.2 315.2,431.9 305.4,440.5 296.8,450.3 289.4,458.9 283.2,464.6 275.8,468.8 266.0,472.0 M408.3,406.0 411.3,415.8 416.2,424.5 421.1,433.1 424.8,442.9 429.8,455.2 434.7,465.1 439.6,472.0 M439.6,472.0 450.7,473.0 460.5,472.0 470.4,467.6 480.2,465.1 490.1,462.6 499.9,457.7 511.0,449.1 517.2,440.5 523.3,430.6 530.7,420.8 536.9,413.4 546.0,407.2 M439.6,472.0 437.1,479.9 433.4,487.3 428.5,497.1 423.6,507.0 416.2,516.8 408.8,529.1 401.4,541.4 394.0,551.3 386.7,561.1 376.8,569.8 364.5,578.4 352.2,587.0 339.9,594.4 327.6,599.3 315.2,604.2 310.3,606.0 M544.5,406.0 540.8,412.2 533.4,418.3 528.5,424.5 526.0,428.2 M609.7,404.8 612.2,406.0 617.1,412.2 623.3,417.1 627.0,422.0 631.9,428.2 634.3,435.5 631.9,442.9 630.7,455.2 629.4,467.6 630.7,479.9 629.4,492.2 630.7,504.5 633.1,516.8 638.0,529.1 644.2,539.0 647.9,548.8 649.1,558.7 651.6,568.5 654.0,578.4 656.5,588.2 659.0,598.1 661.4,606.0 M627.0,422.0 634.3,424.5 639.3,430.6 634.3,435.5 M639.3,430.6 644.2,435.5 649.1,442.9 659.0,449.1 668.8,454.0 681.1,458.9 693.4,462.6 708.2,466.3 723.0,467.6 737.8,470.5 752.5,472.0 762.4,473.7 772.2,478.6 784.6,483.6 796.9,486.0 806.0,493.4 M806.0,536.5 803.0,543.9 801.8,553.7 799.3,563.6 795.6,573.4 791.9,583.3 788.3,593.1 785.8,606.0 M6.0,613.4 10.9,618.3 14.6,630.6 14.6,642.9 15.4,660.2 M6.0,662.1 15.4,660.2 30.6,652.8 47.9,647.9 65.1,643.4 79.9,644.2 92.2,642.9 104.5,641.0 116.8,640.5 126.7,640.0 139.0,640.5 153.7,642.9 166.1,647.9 178.4,654.0 185.8,656.5 198.1,655.2 210.4,651.6 222.7,647.9 232.5,645.4 242.4,642.9 252.2,642.4 264.6,642.9 276.9,642.4 286.0,641.7 M126.2,606.0 126.2,615.8 126.7,628.2 129.1,638.0 132.8,645.4 135.3,652.8 134.0,662.6 132.8,672.5 M92.2,642.9 91.0,651.6 94.6,660.2 104.5,667.6 114.3,672.0 126.7,673.7 134.0,674.9 143.9,681.1 153.7,683.6 159.9,686.0 M203.0,606.0 200.5,615.8 195.6,625.7 190.7,635.5 187.0,645.4 185.8,656.5 M185.8,656.5 178.4,667.6 171.0,676.2 163.6,682.3 159.9,686.0 M285.9,640.5 295.5,635.5 302.9,630.6 306.6,626.9 312.8,623.2 320.2,624.5 332.5,626.2 344.8,628.7 358.3,631.9 364.5,636.8 374.3,638.0 383.0,636.8 389.1,630.6 396.5,625.7 406.4,621.3 418.7,618.8 433.4,618.3 443.3,616.3 453.1,619.5 463.0,621.3 475.3,615.8 487.6,616.3 499.9,617.1 514.7,615.8 527.0,619.5 536.9,624.5 546.0,626.9 M310.3,606.0 308.4,613.4 305.9,620.8 305.4,628.2 306.6,630.6 M545.9,629.6 558.0,633.1 570.3,636.8 582.6,640.0 597.4,639.2 612.2,638.0 627.0,640.5 641.7,644.2 656.5,647.9 671.3,651.6 686.1,654.0 698.4,656.5 708.2,658.9 723.0,660.7 737.8,660.2 752.5,658.2 767.3,656.5 779.6,655.2 787.0,654.0 M660.9,606.0 666.4,613.4 671.3,622.0 676.2,630.6 683.6,638.0 693.4,646.6 702.1,655.2 709.5,663.9 714.4,673.7 718.1,684.8 723.0,695.9 729.2,707.0 735.3,716.8 740.2,727.9 743.9,739.0 747.6,751.3 748.9,763.6 751.3,775.9 753.8,785.8 755.0,791.9 M784.6,606.0 787.0,615.8 788.3,628.2 789.5,640.5 787.0,650.3 788.3,658.9 793.2,667.6 798.1,677.4 801.8,684.8 806.0,694.6 M779.6,645.4 784.6,642.9 789.5,646.6 791.5,655.2 789.5,663.9 784.6,666.3 780.1,662.6 778.4,654.0 779.6,645.4" fill="none" stroke="#80681a" stroke-width="0.99" stroke-linejoin="round"/>
<path d="M6.0,105.2 155.0,105.2 155.7,109.4 160.6,113.9 161.1,119.3 158.2,124.7 155.0,128.6 150.8,132.1 145.9,138.5 140.9,144.4 137.7,149.3 187.0,149.3 M201.8,6.0 203.0,10.9 206.7,17.1 208.4,24.5 206.7,29.4 202.5,31.9 201.8,35.5 205.5,40.5 208.4,46.6 211.6,52.8 214.1,56.5 220.2,58.9 222.7,56.5 221.5,54.0 225.2,58.2 228.9,61.4 231.3,66.3 228.9,71.3 227.6,76.2 230.1,79.9 228.9,84.8 226.4,91.0 223.9,97.1 221.5,99.6 217.8,97.1 214.8,92.7 212.4,95.9 210.4,100.8 208.4,107.0 205.0,105.7 204.2,100.8 201.8,97.6 198.6,99.1 198.1,102.5 201.8,104.5 203.0,109.4 201.8,114.3 198.1,116.8 195.6,119.8 198.1,123.0 200.5,125.4 196.8,127.9 193.1,126.7 190.7,129.1 193.1,132.8 196.1,136.5 193.1,140.2 189.5,142.7 187.7,147.6 188.2,152.5 191.9,155.0 189.5,158.7 185.8,157.4 183.8,160.6 187.0,163.6 184.5,167.3 179.6,168.5 175.9,170.5 171.5,172.2 170.5,175.9 173.4,178.4 175.9,181.3 173.0,183.8 169.0,185.3 171.0,189.5 167.3,190.7 163.6,189.5 161.6,193.1 163.6,196.8 159.9,196.8 156.7,198.1 153.7,200.5 155.0,204.2 158.7,203.0 161.6,201.8 159.9,205.5 M208.4,105.2 286.0,105.2 M286.0,22.7 280.6,25.2 277.4,30.6 276.9,38.0 278.8,46.6 281.8,52.3 279.3,54.3 274.4,51.8 267.0,48.4 257.2,45.4 248.6,40.5 242.4,38.8 237.5,41.0 232.1,45.9 227.1,52.3 225.2,58.2 M304.2,6.0 309.1,10.9 309.8,16.3 305.4,19.5 295.5,21.3 286.9,22.7 M266.0,105.2 311.6,105.2 312.3,97.1 309.8,91.0 309.8,89.0 324.6,89.7 325.1,92.2 364.5,91.4 401.4,90.5 421.1,91.0 453.1,92.2 482.7,93.9 512.2,93.4 546.0,94.2 M545.9,94.2 550.6,95.1 575.2,96.6 604.8,97.6 635.6,97.1 654.0,96.1 686.1,96.1 715.6,96.1 742.7,95.9 766.1,94.2 787.0,94.6 796.9,96.6 806.0,98.3 M635.6,97.1 641.7,92.2 649.1,89.2 659.0,86.0 668.8,84.3 676.2,82.8 679.9,76.2 686.1,73.0 693.4,70.5 697.1,66.3 698.4,60.7 704.5,56.5 707.7,49.8 720.5,42.9 735.3,35.5 742.7,31.9 752.5,23.2 759.9,15.8 764.4,13.4 M748.9,6.0 753.8,10.4 762.4,11.4 766.1,14.6 763.6,19.5 767.3,26.9 774.7,33.6 779.6,36.8 784.6,41.7 793.2,41.7 800.6,39.2 806.0,36.8 M787.0,94.6 783.3,100.8 783.3,109.4 780.9,116.8 782.1,119.3 775.9,118.0 769.8,120.5 766.1,124.2 762.4,131.6 758.7,137.7 752.5,140.2 746.4,135.3 740.2,136.5 734.1,139.0 727.9,143.9 721.8,151.3 716.8,151.8 715.6,146.4 713.1,143.9 708.2,146.9 703.3,150.1 699.6,153.7 694.7,154.2 693.4,158.7 692.2,163.6 688.5,168.5 683.6,169.0 678.7,167.3 673.7,170.5 670.1,173.4 663.9,178.4 659.0,180.8 654.0,184.5 649.1,188.2 641.7,187.0 634.3,187.7 627.0,189.5 619.6,191.9 613.4,196.8 611.0,201.8 611.0,206.0 M159.9,205.5 156.7,206.0 153.7,209.7 155.0,213.4 159.2,215.8 159.9,220.8 158.2,225.2 153.7,226.9 152.5,231.9 148.8,235.1 143.9,236.8 142.7,240.5 146.9,242.9 147.6,247.4 143.9,250.8 139.0,252.3 135.3,252.8 133.6,249.1 131.1,247.4 129.6,250.8 132.1,254.8 130.4,258.2 126.7,256.5 124.7,260.2 127.9,263.1 131.1,265.1 129.1,268.8 126.2,270.5 123.7,267.6 123.0,272.5 125.4,276.2 123.7,279.9 122.2,284.8 123.7,289.7 120.5,292.2 115.6,293.4 111.9,295.1 115.6,299.1 111.9,300.8 107.0,302.0 104.5,305.7 100.8,307.0 97.1,305.7 96.6,309.4 100.8,310.7 104.5,311.9 103.3,315.6 99.6,316.8 99.1,321.7 95.9,325.4 91.0,326.7 86.0,328.6 84.8,331.6 89.7,333.6 88.5,337.7 86.0,341.4 89.7,343.9 92.2,347.6 88.5,348.8 83.6,346.9 81.1,350.1 84.8,353.7 88.5,355.0 86.0,357.4 81.1,356.7 77.4,353.7 74.9,356.2 77.4,359.9 79.9,363.6 76.2,366.1 74.5,369.8 77.4,373.4 81.1,375.9 84.8,374.7 87.3,377.1 86.0,380.8 82.3,383.3 81.1,387.0 83.6,390.7 87.3,391.9 88.5,395.6 84.8,396.8 86.0,401.8 82.3,404.2 77.4,406.0 M142.7,238.0 286.0,238.0 M266.0,238.0 299.2,237.5 334.9,237.5 399.0,238.0 445.8,238.5 470.4,238.5 492.5,238.8 522.1,238.8 546.0,238.8 M299.2,237.5 302.9,244.2 307.4,247.9 306.6,255.2 305.4,270.0 302.9,287.3 300.5,309.4 298.0,334.0 295.5,358.7 293.1,383.3 290.6,406.0 M492.5,238.8 495.0,247.9 497.5,257.7 501.2,279.9 506.1,309.4 509.8,334.0 513.5,358.7 517.2,383.3 520.9,406.0 M545.9,238.8 587.6,238.8 659.0,238.8 678.7,238.0 693.4,233.1 703.3,230.6 708.2,228.2 718.1,225.7 727.9,222.0 731.6,219.5 732.8,221.3 740.2,220.3 759.9,220.3 782.1,222.0 806.0,223.2 M611.0,206.0 609.7,210.9 604.8,214.6 597.4,215.8 592.0,215.4 589.5,220.8 588.8,230.6 588.1,238.8 M678.7,238.0 677.4,242.9 671.3,247.9 666.4,254.0 662.7,258.9 660.2,263.9 663.9,267.6 670.1,271.3 676.2,276.2 681.1,281.1 686.1,284.3 694.7,283.6 697.1,288.5 700.8,295.9 704.5,302.0 705.8,309.4 709.5,315.6 713.1,321.7 716.8,327.9 720.5,331.6 727.9,336.5 735.3,341.4 740.2,346.4 743.9,353.7 747.6,359.9 753.8,363.6 758.7,367.3 761.2,372.2 766.1,375.9 767.3,380.8 766.1,385.8 769.8,389.5 772.2,395.6 778.4,400.5 782.1,406.0 M6.0,415.4 79.9,415.4 M77.4,406.0 81.1,409.7 79.9,415.4 76.2,419.5 77.4,424.5 82.3,423.2 86.0,419.5 84.8,428.2 81.1,433.1 79.9,439.2 82.3,445.4 87.3,449.1 91.0,450.3 89.7,455.2 84.8,456.5 84.3,462.6 88.5,466.3 93.4,465.1 95.9,468.8 99.6,471.3 99.1,476.2 94.6,478.6 91.0,479.9 87.3,482.3 82.3,484.8 79.4,488.5 79.9,493.4 84.8,494.6 89.7,492.2 91.0,495.9 87.3,499.6 83.6,503.3 79.9,507.0 77.4,510.7 73.7,514.3 70.0,518.0 66.3,520.5 65.1,524.2 68.8,527.9 72.5,526.7 71.3,523.0 67.6,524.2 63.9,527.9 62.6,531.6 61.4,536.5 57.7,537.7 54.0,540.2 55.2,543.9 58.9,542.7 60.2,546.4 56.5,550.1 52.8,552.5 49.8,556.2 49.1,559.9 52.8,562.4 55.2,559.9 54.0,556.2 51.6,563.6 52.8,568.5 47.9,570.5 44.2,571.5 45.4,575.9 47.9,579.6 44.9,582.1 46.6,587.0 49.1,590.7 45.4,594.4 M44.2,594.4 185.8,594.4 186.3,596.8 184.5,600.5 183.3,606.0 M286.0,450.3 284.3,467.6 282.3,489.7 280.6,511.9 279.8,534.0 281.3,553.7 282.3,578.4 284.3,606.0 M520.9,406.0 523.3,415.8 525.8,428.2 530.7,442.9 534.4,455.2 539.3,466.3 538.1,474.9 544.3,478.6 546.0,482.3 M290.6,406.0 288.7,425.7 286.2,450.3 283.7,474.9 281.3,499.6 279.5,524.2 280.8,548.8 282.0,573.4 283.2,593.1 283.7,606.0 M344.8,594.4 536.9,594.4 M344.8,594.4 342.3,600.5 341.1,606.0 M545.9,482.3 540.8,484.8 535.8,491.0 533.4,497.1 532.2,504.5 530.9,514.3 531.4,524.2 533.4,536.5 534.6,543.9 533.4,553.7 530.9,563.6 529.7,573.4 532.2,583.3 535.8,593.1 538.3,600.5 540.8,606.0 M782.1,406.0 789.5,409.7 795.6,413.4 799.3,419.5 800.6,425.7 803.0,430.6 806.0,433.1 M183.3,606.0 179.6,612.2 178.4,620.8 179.6,630.6 183.3,638.0 188.2,642.9 189.5,650.3 188.2,657.7 191.9,663.9 196.8,667.6 M283.7,606.0 284.5,620.8 285.2,635.5 285.7,647.9 M341.1,606.0 347.3,612.2 353.4,618.3 M546.9,620.3 585.1,622.3 641.7,625.7 688.5,628.7 727.9,630.6 743.9,631.1 745.7,640.5 746.4,649.1 M353.2,620.0 356.3,621.0 358.8,623.1 359.4,626.2 359.1,629.2 357.5,632.3 355.7,634.8 355.9,638.5 357.5,641.9 359.4,644.0 M746.0,647.5 748.7,650.2 754.1,650.9 758.2,650.2 758.9,642.1 759.5,635.3 758.9,628.5 757.9,623.1 758.2,617.7 760.2,613.6 763.6,610.2 767.7,609.5 773.1,612.3 778.5,615.0 785.3,617.0 790.7,618.3" fill="none" stroke="#000" stroke-width="0.99" stroke-linejoin="round"/>
<path d="M508.5,694.0 506.9,697.1 506.6,701.4 507.9,705.7 509.7,710.0 511.6,712.5 M533.1,719.3 537.4,718.0 542.3,715.6 547.3,713.1 552.2,710.7 557.1,707.6 560.2,704.5 M562.7,702.7 565.7,701.4 569.4,699.0 M336.0,662.5 343.4,660.0 350.8,656.9 360.6,653.9 370.5,650.8 380.3,648.6 390.2,647.3 400.0,647.3 409.9,647.7 419.7,648.6 429.6,649.6 439.4,651.4 446.8,653.5 454.2,656.0 461.6,659.2 469.0,663.1 476.0,666.8 M228.2,662.5 235.6,661.9 M241.1,664.3 245.4,663.3 250.3,661.9 M257.7,661.3 265.1,662.5 275.0,663.7 M278.7,664.9 286.0,664.9 M297.1,661.9 303.3,660.9 308.2,660.0 M241.7,698.8 242.9,702.5 M245.4,693.9 249.1,692.7 M242.9,661.9 247.9,663.1 M311.9,663.7 321.7,663.1 329.1,662.5 335.3,660.9" fill="none" stroke="#000" stroke-width="1.6"/>
<path d="M249.1,678.5 252.8,682.8 254.6,689.0 254.0,696.3 251.6,703.7 247.9,709.9 242.9,714.8 238.6,717.3" fill="none" stroke="#000" stroke-width="1.5" stroke-dasharray="3.5 1.5 1.5 2 5 2"/>
<circle cx="407.2" cy="407.2" r="519.5" fill="none" stroke="#dcdcdc" stroke-width="0.99"/>
<circle cx="407.2" cy="407.2" r="399.6" fill="none" stroke="#dcdcdc" stroke-width="0.99"/>
<circle cx="407.2" cy="407.2" r="279.5" fill="none" stroke="#dcdcdc" stroke-width="0.99"/>
<circle cx="407.2" cy="407.2" r="159.3" fill="none" stroke="#dcdcdc" stroke-width="0.99"/>
<circle cx="407.2" cy="407.2" r="39.4" fill="none" stroke="#dcdcdc" stroke-width="0.99"/>
<rect x="395" y="3.1999999999999655" width="22.5" height="10" fill="#5c4f49"/>
<text x="406.5" y="11.2" font-size="10" fill="#ffffa0" text-anchor="middle" font-family="'DejaVu Sans',sans-serif">313</text>
<rect x="395" y="123.29999999999998" width="22.5" height="10" fill="#5c4f49"/>
<text x="406.5" y="131.3" font-size="10" fill="#ffffa0" text-anchor="middle" font-family="'DejaVu Sans',sans-serif">219</text>
<rect x="395" y="243.49999999999997" width="22.5" height="10" fill="#5c4f49"/>
<text x="406.5" y="251.5" font-size="10" fill="#ffffa0" text-anchor="middle" font-family="'DejaVu Sans',sans-serif">125</text>
<text x="406.5" y="371.4" font-size="10" fill="#ffffa0" text-anchor="middle" font-family="'DejaVu Sans',sans-serif">31</text>
<circle cx="407.2" cy="407.2" r="39.4" fill="none" stroke="#ff0000" stroke-width="0.99"/>
</svg>
<rect x="8.5" y="759.5" width="243" height="43" fill="#000" stroke="#8c8c8c"/>
<text x="13.2" y="770.6" font-size="9.3" fill="#dcdce4" textLength="35.8" lengthAdjust="spacing" font-family="'Liberation Sans','DejaVu Sans',sans-serif">Symbols</text>
<text x="53" y="770.6" font-size="9.3" fill="#fff" textLength="17.2" lengthAdjust="spacing" font-family="'Liberation Sans','DejaVu Sans',sans-serif">-CG</text>
<text x="78" y="770.6" font-size="9.3" fill="#fff" textLength="14.8" lengthAdjust="spacing" font-family="'Liberation Sans','DejaVu Sans',sans-serif">-IC</text>
<text x="98.8" y="770.6" font-size="9.3" fill="#fff" textLength="20.2" lengthAdjust="spacing" font-family="'Liberation Sans','DejaVu Sans',sans-serif">+CG</text>
<text x="123.5" y="770.6" font-size="9.3" fill="#fff" textLength="18" lengthAdjust="spacing" font-family="'Liberation Sans','DejaVu Sans',sans-serif">+IC</text>
<text x="152.8" y="770.6" font-size="9.3" fill="#d0d4e0" textLength="90.8" lengthAdjust="spacing" font-family="'Liberation Sans','DejaVu Sans',sans-serif">Strike age color codes</text>
<text x="13.2" y="784.2" font-size="9.3" fill="#dcdce4" textLength="28.2" lengthAdjust="spacing" font-family="'Liberation Sans','DejaVu Sans',sans-serif">Recent</text>
<text x="13.2" y="797.2" font-size="9.3" fill="#dcdce4" textLength="15" lengthAdjust="spacing" font-family="'Liberation Sans','DejaVu Sans',sans-serif">Old</text>
<circle cx="60.4" cy="780.4" r="4.2" fill="none" stroke="#00e8f0" stroke-width="1.1"/><line x1="58.1" y1="780.4" x2="62.699999999999996" y2="780.4" stroke="#00e8f0" stroke-width="1.1"/>
<line x1="81.9" y1="780.4" x2="89.1" y2="780.4" stroke="#00e8f0" stroke-width="1.1"/>
<circle cx="110.5" cy="780.4" r="4.2" fill="none" stroke="#00e8f0" stroke-width="1.1"/><line x1="108.2" y1="780.4" x2="112.8" y2="780.4" stroke="#00e8f0" stroke-width="1.1"/><line x1="110.5" y1="778.1" x2="110.5" y2="782.6999999999999" stroke="#00e8f0" stroke-width="1.1"/>
<line x1="131.9" y1="780.4" x2="139.1" y2="780.4" stroke="#00e8f0" stroke-width="1.1"/><line x1="135.5" y1="776.8" x2="135.5" y2="784.0" stroke="#00e8f0" stroke-width="1.1"/>
<circle cx="60.4" cy="793.4" r="4.2" fill="none" stroke="#f0f000" stroke-width="1.1"/><line x1="58.1" y1="793.4" x2="62.699999999999996" y2="793.4" stroke="#f0f000" stroke-width="1.1"/>
<line x1="81.9" y1="793.4" x2="89.1" y2="793.4" stroke="#f0f000" stroke-width="1.1"/>
<circle cx="110.5" cy="793.4" r="4.2" fill="none" stroke="#f0f000" stroke-width="1.1"/><line x1="108.2" y1="793.4" x2="112.8" y2="793.4" stroke="#f0f000" stroke-width="1.1"/><line x1="110.5" y1="791.1" x2="110.5" y2="795.6999999999999" stroke="#f0f000" stroke-width="1.1"/>
<line x1="131.9" y1="793.4" x2="139.1" y2="793.4" stroke="#f0f000" stroke-width="1.1"/><line x1="135.5" y1="789.8" x2="135.5" y2="797.0" stroke="#f0f000" stroke-width="1.1"/>
<text x="153.3" y="784.2" font-size="9.3" fill="#f0d000" textLength="17" lengthAdjust="spacing" font-family="'Liberation Sans','DejaVu Sans',sans-serif">15+</text>
<text x="188.1" y="784.2" font-size="9.3" fill="#f0a400" textLength="17" lengthAdjust="spacing" font-family="'Liberation Sans','DejaVu Sans',sans-serif">30+</text>
<text x="222.8" y="784.2" font-size="9.3" fill="#f08c00" textLength="17" lengthAdjust="spacing" font-family="'Liberation Sans','DejaVu Sans',sans-serif">45+</text>
<text x="153.3" y="797.2" font-size="9.3" fill="#f07400" textLength="17" lengthAdjust="spacing" font-family="'Liberation Sans','DejaVu Sans',sans-serif">60+</text>
<text x="188.1" y="797.2" font-size="9.3" fill="#f05800" textLength="17" lengthAdjust="spacing" font-family="'Liberation Sans','DejaVu Sans',sans-serif">75+</text>
<text x="222.8" y="797.2" font-size="9.3" fill="#f03c00" textLength="17" lengthAdjust="spacing" font-family="'Liberation Sans','DejaVu Sans',sans-serif">90+</text>
<circle cx="551.5" cy="734.5" r="4.2" fill="none" stroke="#e89000" stroke-width="1.1"/><line x1="549.2" y1="734.5" x2="553.8" y2="734.5" stroke="#e89000" stroke-width="1.1"/><line x1="551.5" y1="732.2" x2="551.5" y2="736.8" stroke="#e89000" stroke-width="1.1"/>
<circle cx="674.4" cy="743.5" r="4.2" fill="none" stroke="#f09000" stroke-width="1.1"/><line x1="672.1" y1="743.5" x2="676.6999999999999" y2="743.5" stroke="#f09000" stroke-width="1.1"/>
<circle cx="645.6" cy="771.5" r="4.2" fill="none" stroke="#e89000" stroke-width="1.1"/><line x1="643.3000000000001" y1="771.5" x2="647.9" y2="771.5" stroke="#e89000" stroke-width="1.1"/><line x1="645.6" y1="769.2" x2="645.6" y2="773.8" stroke="#e89000" stroke-width="1.1"/>
<circle cx="633.5" cy="782.4" r="4.2" fill="none" stroke="#f0b000" stroke-width="1.1"/><line x1="631.2" y1="782.4" x2="635.8" y2="782.4" stroke="#f0b000" stroke-width="1.1"/><line x1="633.5" y1="780.1" x2="633.5" y2="784.6999999999999" stroke="#f0b000" stroke-width="1.1"/>
<circle cx="619.6" cy="793.4" r="4.2" fill="none" stroke="#e08000" stroke-width="1.1"/><line x1="617.3000000000001" y1="793.4" x2="621.9" y2="793.4" stroke="#e08000" stroke-width="1.1"/>
<circle cx="654.6" cy="793.4" r="4.2" fill="none" stroke="#f0c000" stroke-width="1.1"/><line x1="652.3000000000001" y1="793.4" x2="656.9" y2="793.4" stroke="#f0c000" stroke-width="1.1"/>
<rect x="685" y="792" width="121" height="14" fill="#000"/>
<text x="689" y="801.7" font-size="9.3" fill="#fff" textLength="113" lengthAdjust="spacing" font-family="'Liberation Sans','DejaVu Sans',sans-serif">©2005 Astrogenic Systems</text>
<rect x="812.5" y="8.5" width="319" height="319" fill="none" stroke="#c4c4c4" rx="4.5"/>
<rect x="812.5" y="333.5" width="319" height="114" fill="none" stroke="#c4c4c4" rx="4.5"/>
<rect x="812.5" y="453.5" width="319" height="349" fill="none" stroke="#c4c4c4" rx="4.5"/>
<rect x="819" y="16" width="58" height="18" fill="#5a0000"/>
<path d="M819.5 33.5V16.5H876.5" fill="none" stroke="#f0f0f0"/>
<path d="M819.5 33.5H876.5V16.5" fill="none" stroke="#9a9a9a"/>
<text x="824" y="30" font-size="12" fill="#e0e0e0" font-weight="bold" textLength="49.2" lengthAdjust="spacing">STRIKE</text>
<rect x="883" y="16" width="58" height="18" fill="#333"/>
<path d="M883.5 33.5V16.5H940.5" fill="none" stroke="#f0f0f0"/>
<path d="M883.5 33.5H940.5V16.5" fill="none" stroke="#9a9a9a"/>
<text x="890" y="30" font-size="12" fill="#b4b4b4" font-weight="bold" textLength="44.4" lengthAdjust="spacing">NOISE</text>
<rect x="994" y="16" width="128" height="18" fill="#333"/>
<path d="M994.5 33.5V16.5H1121.5" fill="none" stroke="#f0f0f0"/>
<path d="M994.5 33.5H1121.5V16.5" fill="none" stroke="#9a9a9a"/>
<text x="998" y="30" font-size="12" fill="#fff" font-weight="bold" textLength="63.5" lengthAdjust="spacing">Bng 215°</text>
<text x="1075.3" y="30" font-size="12" fill="#00e400" font-weight="bold" textLength="43" lengthAdjust="spacing">391mi</text>
<rect x="821" y="64" width="82" height="16" fill="#666"/>
<path d="M821.5 79.5V64.5H902.5" fill="none" stroke="#e8e8e8"/>
<path d="M821.5 79.5H902.5V64.5" fill="none" stroke="#a0a0a0"/>
<text x="862" y="76" font-size="11" fill="#e4e4e4" text-anchor="middle" textLength="66" lengthAdjust="spacing">Strikes/min</text>
<text x="903.6" y="112" font-size="28" fill="#fff" font-weight="bold" text-anchor="end">0</text>
<text x="903" y="143" font-size="12" fill="#fff" text-anchor="end" textLength="76.8" lengthAdjust="spacing">Total Strikes</text>
<text x="903" y="161" font-size="12" fill="#fff" text-anchor="end">135</text>
<rect x="931" y="64" width="82" height="16" fill="#666"/>
<path d="M931.5 79.5V64.5H1012.5" fill="none" stroke="#e8e8e8"/>
<path d="M931.5 79.5H1012.5V64.5" fill="none" stroke="#a0a0a0"/>
<text x="972" y="76" font-size="11" fill="#e4e4e4" text-anchor="middle" textLength="58.5" lengthAdjust="spacing">Close/min</text>
<text x="1013.6" y="112" font-size="28" fill="#fff" font-weight="bold" text-anchor="end">0</text>
<text x="1013" y="143" font-size="12" fill="#fff" text-anchor="end" textLength="68.8" lengthAdjust="spacing">Total Close</text>
<text x="1013" y="161" font-size="12" fill="#fff" text-anchor="end">0</text>
<rect x="1041" y="64" width="82" height="16" fill="#666"/>
<path d="M1041.5 79.5V64.5H1122.5" fill="none" stroke="#e8e8e8"/>
<path d="M1041.5 79.5H1122.5V64.5" fill="none" stroke="#a0a0a0"/>
<text x="1082" y="76" font-size="11" fill="#c8c8c8" text-anchor="middle" textLength="63" lengthAdjust="spacing">Noises/min</text>
<text x="1123.6" y="112" font-size="28" fill="#bcbcbc" font-weight="bold" text-anchor="end">1</text>
<text x="1123" y="143" font-size="12" fill="#c8c8c8" text-anchor="end" textLength="75.5" lengthAdjust="spacing">Total Noises</text>
<text x="1123" y="161" font-size="12" fill="#e0e0e0" text-anchor="end">61</text>
<text x="820.7" y="214.5" font-size="12" fill="#c4c4c4" textLength="165.6" lengthAdjust="spacing">Lightning type distribution</text>
<line x1="821" y1="217.5" x2="1124" y2="217.5" stroke="#909090" />
<text x="820.7" y="237" font-size="11.5" fill="#fff" font-weight="bold" textLength="85.2" lengthAdjust="spacing">Cloud-ground</text>
<text x="913" y="237" font-size="12" fill="#e8e8e8">+</text>
<rect x="925.5" y="227.5" width="50" height="10" fill="#000" stroke="#868686" rx="1.5"/>
<rect x="926" y="228" width="30" height="9" fill="#ff0000"/>
<text x="979.4" y="237" font-size="12" fill="#fff" font-weight="bold" textLength="29.4" lengthAdjust="spacing">62%</text>
<rect x="1016.2" y="231.4" width="6.6" height="1.8" fill="#e8e8e8"/>
<rect x="1028.5" y="227.5" width="50" height="10" fill="#000" stroke="#868686" rx="1.5"/>
<rect x="1029" y="228" width="16.3" height="9" fill="#90ccff"/>
<text x="1082" y="237" font-size="12" fill="#fff" font-weight="bold" textLength="29.4" lengthAdjust="spacing">33%</text>
<text x="820.7" y="261" font-size="11.5" fill="#c8c8c8" font-weight="bold" textLength="38.5" lengthAdjust="spacing">Count</text>
<text x="925" y="261" font-size="12" fill="#fff" font-weight="bold">84</text>
<text x="1027.7" y="261" font-size="12" fill="#fff" font-weight="bold">44</text>
<text x="820.7" y="291" font-size="11.5" fill="#fff" font-weight="bold" textLength="63.5" lengthAdjust="spacing">Intracloud</text>
<text x="913" y="291" font-size="12" fill="#e8e8e8">+</text>
<rect x="925.5" y="281.5" width="50" height="10" fill="#000" stroke="#868686" rx="1.5"/>
<rect x="926" y="282" width="1" height="9" fill="#ff60c0"/>
<text x="979.4" y="291" font-size="12" fill="#fff" font-weight="bold" textLength="21" lengthAdjust="spacing">1%</text>
<rect x="1016.2" y="285.4" width="6.6" height="1.8" fill="#e8e8e8"/>
<rect x="1028.5" y="281.5" width="50" height="10" fill="#000" stroke="#868686" rx="1.5"/>
<rect x="1029" y="282" width="2" height="9" fill="#00ff00"/>
<text x="1082" y="291" font-size="12" fill="#fff" font-weight="bold" textLength="21" lengthAdjust="spacing">4%</text>
<text x="820.7" y="315" font-size="11.5" fill="#c8c8c8" font-weight="bold" textLength="38.5" lengthAdjust="spacing">Count</text>
<text x="925" y="315" font-size="12" fill="#fff" font-weight="bold">2</text>
<text x="1027.7" y="315" font-size="12" fill="#fff" font-weight="bold">5</text>
<text x="821" y="353" font-size="16" fill="#00e400" font-weight="bold" textLength="203" lengthAdjust="spacing">3/2/2026 12:15:19 PM</text>
<line x1="821" y1="358.5" x2="1124" y2="358.5" stroke="#909090" />
<text x="821" y="387.8" font-size="12" fill="#fff" textLength="49" lengthAdjust="spacing">Squelch</text>
<text x="909.2" y="387.8" font-size="12" fill="#fff">0</text>
<text x="981.2" y="387.8" font-size="12" fill="#fff" textLength="44" lengthAdjust="spacing">Upload</text>
<text x="1061.2" y="387.8" font-size="12" fill="#c8c8c8" textLength="53.5" lengthAdjust="spacing">Disabled</text>
<text x="821" y="407.7" font-size="12" fill="#fff" textLength="72.6" lengthAdjust="spacing">Persistence</text>
<text x="909.2" y="407.7" font-size="12" fill="#fff" textLength="41.8" lengthAdjust="spacing">90 min</text>
<text x="981.2" y="407.7" font-size="12" fill="#fff" textLength="50.8" lengthAdjust="spacing">Capture</text>
<text x="1061.2" y="407.7" font-size="12" fill="#00dc00" textLength="36.2" lengthAdjust="spacing">Active</text>
<text x="821" y="427.6" font-size="12" fill="#fff" textLength="39.8" lengthAdjust="spacing">Range</text>
<text x="909.2" y="427.6" font-size="12" fill="#fff" textLength="41.8" lengthAdjust="spacing">313 mi</text>
<text x="981.2" y="427.6" font-size="12" fill="#fff" textLength="52.6" lengthAdjust="spacing">Receiver</text>
<text x="1061.2" y="427.6" font-size="12" fill="#00dc00" textLength="50.2" lengthAdjust="spacing">Enabled</text>
<text x="821" y="474.6" font-size="12" fill="#c8c8c8" textLength="44" lengthAdjust="spacing">Uptime</text>
<text x="909.6" y="474.6" font-size="12" fill="#fff" textLength="51.6" lengthAdjust="spacing">1176:00</text>
<text x="981.2" y="474.6" font-size="12" fill="#c8c8c8" textLength="62" lengthAdjust="spacing">Peak time</text>
<text x="1061.2" y="474.6" font-size="12" fill="#c8c8c8" textLength="24" lengthAdjust="spacing">Plot</text>
<text x="821" y="497.8" font-size="12" fill="#c8c8c8" textLength="61" lengthAdjust="spacing">Peak rate</text>
<text x="909.2" y="497.8" font-size="12" fill="#fff" textLength="34.6" lengthAdjust="spacing">2/min</text>
<text x="981.6" y="497.8" font-size="12" fill="#fff" textLength="58" lengthAdjust="spacing">11:12 AM</text>
<text x="1061.2" y="497.8" font-size="12" fill="#fff" textLength="35.6" lengthAdjust="spacing">Strike</text>
<text x="822.4" y="528" font-size="12" fill="#c8c8c8" textLength="76.2" lengthAdjust="spacing">Trend graph</text>
<text x="908.4" y="528" font-size="12" fill="#fff" textLength="41.8" lengthAdjust="spacing">60 min</text>
<path d="M1088.5 542V777.5H822" fill="none" stroke="#c8c8c8"/>
<line x1="1084" y1="542.5" x2="1088" y2="542.5" stroke="#c8c8c8" />
<line x1="1084" y1="581.5" x2="1088" y2="581.5" stroke="#c8c8c8" />
<line x1="1084" y1="620.5" x2="1088" y2="620.5" stroke="#c8c8c8" />
<line x1="1084" y1="660.5" x2="1088" y2="660.5" stroke="#c8c8c8" />
<line x1="1084" y1="699.5" x2="1088" y2="699.5" stroke="#c8c8c8" />
<line x1="1084" y1="738.5" x2="1088" y2="738.5" stroke="#c8c8c8" />
<line x1="822.5" y1="775" x2="822.5" y2="780" stroke="#c8c8c8" />
<line x1="866.5" y1="775" x2="866.5" y2="779" stroke="#c8c8c8" />
<line x1="911.5" y1="775" x2="911.5" y2="779" stroke="#c8c8c8" />
<line x1="955.5" y1="775" x2="955.5" y2="779" stroke="#c8c8c8" />
<line x1="1000.5" y1="775" x2="1000.5" y2="779" stroke="#c8c8c8" />
<line x1="1044.5" y1="775" x2="1044.5" y2="779" stroke="#c8c8c8" />
<line x1="1088.5" y1="775" x2="1088.5" y2="779" stroke="#c8c8c8" />
<path d="M822.5 777V769.5H825.5L827.0 777" fill="none" stroke="#f0f0f0"/>
<path d="M894.5 777L896.5 769.5H899.0L901.0 777" fill="none" stroke="#f0f0f0"/>
<path d="M944.5 777L946.5 769.5H949.0L951.0 777" fill="none" stroke="#f0f0f0"/>
<path d="M1002.5 777L1004.5 769.5H1007.0L1009.0 777" fill="none" stroke="#f0f0f0"/>
<text x="1091.6" y="546.6" font-size="11" fill="#c8c8c8" textLength="14" lengthAdjust="spacing">30</text>
<text x="1091.6" y="624.9" font-size="11" fill="#c8c8c8" textLength="14" lengthAdjust="spacing">20</text>
<text x="1091.6" y="703.2" font-size="11" fill="#c8c8c8" textLength="14" lengthAdjust="spacing">10</text>
<text x="820" y="792.6" font-size="11" fill="#c8c8c8" textLength="13.6" lengthAdjust="spacing">60</text>
<text x="864.2" y="792.6" font-size="11" fill="#c8c8c8" textLength="13.6" lengthAdjust="spacing">50</text>
<text x="908.8" y="792.6" font-size="11" fill="#c8c8c8" textLength="13.6" lengthAdjust="spacing">40</text>
<text x="952.6" y="792.6" font-size="11" fill="#c8c8c8" textLength="13.6" lengthAdjust="spacing">30</text>
<text x="997" y="792.6" font-size="11" fill="#c8c8c8" textLength="13.6" lengthAdjust="spacing">20</text>
<text x="1042.4" y="792.6" font-size="11" fill="#c8c8c8" textLength="13.6" lengthAdjust="spacing">10</text>
<text x="1087.2" y="792.6" font-size="11" fill="#c8c8c8">0</text>
<text x="1100.4" y="792.6" font-size="11" fill="#c8c8c8" textLength="18" lengthAdjust="spacing">min</text>
</svg>
</body></html>
